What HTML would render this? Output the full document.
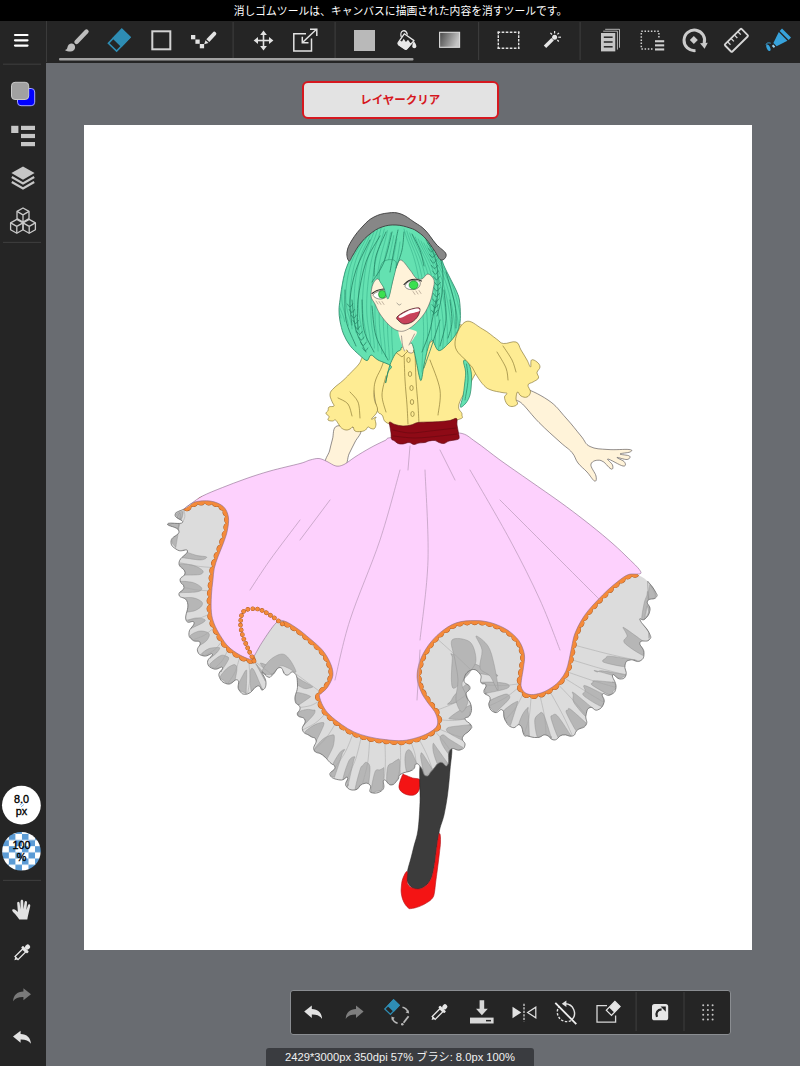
<!DOCTYPE html>
<html lang="ja">
<head>
<meta charset="utf-8">
<title>MediBang Paint</title>
<style>
html,body{margin:0;padding:0;}
body{width:800px;height:1066px;overflow:hidden;background:#696c71;position:relative;font-family:"Liberation Sans","Noto Sans CJK JP",sans-serif;}
#hint{position:absolute;left:0;top:0;width:800px;height:21px;background:#000;color:#fff;font-size:10.8px;line-height:21px;text-align:center;white-space:nowrap;letter-spacing:0;}
#hint span{position:relative;top:0.5px;left:0.5px}
#toolbar{position:absolute;left:0;top:21px;width:800px;height:42px;background:#252525;}
#toolbar svg{position:absolute;left:0;top:-21px;}
#sidebar{position:absolute;left:0;top:63px;width:46px;height:1003px;background:#252525;}
#sidebar svg{position:absolute;left:0;top:-63px;}
.sz{position:absolute;left:2px;width:39px;text-align:center;color:#000;font-weight:400;-webkit-text-stroke:0.35px #000;font-size:10.8px;line-height:11.5px;}
#clear{position:absolute;left:302px;top:81px;width:192.5px;height:34px;border:2px solid #d6181f;border-radius:6px;background:#e3e3e3;color:#d6181f;font-weight:700;font-size:11.5px;line-height:34px;text-align:center;}
#canvas{position:absolute;left:84px;top:125px;width:668px;height:824.5px;background:#fff;overflow:hidden;}
#canvas svg{position:absolute;left:-84px;top:-125px;}
#bottombar{position:absolute;left:290px;top:989.5px;width:439px;height:43.5px;background:#252525;border:1px solid #8a8d91;border-radius:3px;box-sizing:content-box;}
#bottombar svg{position:absolute;left:-291px;top:-990.5px;}
#status{position:absolute;left:266px;top:1047.5px;width:268px;height:19px;background:#3a3c40;border-radius:3px 3px 0 0;color:#f0f0f0;font-size:11.2px;line-height:19px;text-align:center;white-space:nowrap;}
</style>
</head>
<body>
<div id="hint"><span>消しゴムツールは、キャンバスに描画された内容を消すツールです。</span></div>

<div id="toolbar">
<svg width="800" height="70" viewBox="0 0 800 70">
<!--TOOLBAR-->
<g fill="none" stroke="none">
<!-- separators -->
<rect x="46" y="21" width="1" height="41" fill="#3b3b3b"/>
<rect x="232.5" y="22" width="1.2" height="38" fill="#3b3b3b"/>
<rect x="334.5" y="22" width="1.2" height="38" fill="#3b3b3b"/>
<rect x="478" y="22" width="1.2" height="38" fill="#3b3b3b"/>
<rect x="579.5" y="22" width="1.2" height="38" fill="#3b3b3b"/>
<!-- underline -->
<rect x="59" y="58" width="354.5" height="2.6" rx="1" fill="#a2a2a2"/>
<!-- hamburger -->
<g stroke="#fff" stroke-width="2.2" stroke-linecap="round">
<line x1="15" y1="35" x2="27.5" y2="35"/><line x1="15" y1="40.3" x2="27.5" y2="40.3"/><line x1="15" y1="45.6" x2="27.5" y2="45.6"/>
</g>
<!-- brush -->
<line x1="86.5" y1="31.5" x2="76.5" y2="42" stroke="#bdbdbd" stroke-width="4.4" stroke-linecap="round"/>
<path d="M71 43.600c2.300-.3 4.100 1.400 4.100 3.600c0 2.400-2 4.300-4.600 4.300c-2.100 0-4.200-.5-5.700-1.500c1.600-.4 2.300-1.300 2.600-2.600c.4-2 1.700-3.500 3.600-3.800z" fill="#bdbdbd"/>
<!-- eraser -->
<g transform="translate(119.2 40.3) rotate(-46)">
<rect x="-9.600" y="-5.700" width="19.200" height="11.400" fill="none" stroke="#2e8db4" stroke-width="1.600"/>
<rect x="-3.400" y="-6.400" width="13.800" height="12.800" fill="#2e8db4"/>
</g>
<!-- square -->
<rect x="152.3" y="31.3" width="18" height="18" stroke="#d2d2d2" stroke-width="2"/>
<!-- dot pen -->
<g fill="#e2e2e2">
<rect x="191" y="35" width="4.300" height="4.300"/><rect x="195.400" y="39.500" width="4.300" height="4.300"/><rect x="199.800" y="44" width="4.300" height="4.300"/>
<path d="M204.200 44.300l1.300-4l3 2.700z"/>
<path d="M206.300 39.300l6.500-6.900a2 2 0 0 1 3 2.700l-6.500 6.900z"/>
</g>
<!-- move -->
<g stroke="#e2e2e2" stroke-width="1.600">
<line x1="263.500" y1="33" x2="263.500" y2="48"/><line x1="256" y1="40.500" x2="271" y2="40.500"/>
</g>
<g fill="#e2e2e2">
<path d="M263.500 30.600l3.400 4.400h-6.800z"/><path d="M263.500 50.400l3.400-4.400h-6.800z"/>
<path d="M253.600 40.500l4.400-3.400v6.800z"/><path d="M273.400 40.500l-4.400-3.400v6.800z"/>
</g>
<!-- transform -->
<g stroke="#e2e2e2" stroke-width="1.500" fill="none">
<path d="M306 33.800h-12.200v17.200h17.700v-12.500"/>
<path d="M302.500 42.500l14-13.300"/>
<path d="M310 29.200h6.800v6.800"/>
<path d="M302.300 36.800v6h6.200"/>
</g>
<!-- fill square -->
<rect x="354" y="30" width="21" height="21" fill="#b9b9b9"/>
<!-- bucket -->
<path d="M404.300 33.800l9.700 6.800l-7.200 8.200c-.5.500-1.300.6-1.900.2l-6.300-4.400c-.7-.5-.8-1.300-.4-2z" fill="#252525" stroke="#e8e8e8" stroke-width="1.300" stroke-linejoin="round"/>
<path d="M399.400 40.600l2.600 1l1.700-2.900l2.200 3.400l2.100-2.300l2.300 3.200l2.400-.3l-5.900 6.700c-.5.500-1.300.6-1.900.2l-6.300-4.400c-.7-.5-.8-1.300-.4-2z" fill="#e8e8e8"/>
<path d="M401.300 37c-.9-2.600-.3-5.400 1.700-6.100c2-.6 3.700 1.200 4.500 3.700" fill="none" stroke="#e8e8e8" stroke-width="1.300"/>
<path d="M413.800 41.200c1.400 1.600 2.500 3.500 2.500 5a2 2 0 0 1-4 0c0-1.700.7-3.400 1.500-5z" fill="#e8e8e8"/>
<!-- gradient -->
<defs><linearGradient id="gr" x1="0" y1="0" x2="1" y2="0.300"><stop offset="0" stop-color="#474747"/><stop offset="1" stop-color="#c4c4c4"/></linearGradient></defs>
<rect x="439.600" y="32.300" width="20" height="15" fill="url(#gr)" stroke="#dcdcdc" stroke-width="1.100"/>
<!-- select rect -->
<g stroke="#e2e2e2" stroke-width="1.400" stroke-dasharray="2.600 1.460"><path d="M497.600 32.300h21.800"/><path d="M497.600 48.300h21.800"/><path d="M498.300 31.600v17.400" stroke-dasharray="2.600 1.100"/><path d="M518.700 31.600v17.400" stroke-dasharray="2.600 1.100"/></g>
<!-- wand -->
<line x1="545" y1="46.700" x2="552.600" y2="39.200" stroke="#e6e6e6" stroke-width="3.400"/>
<circle cx="554.600" cy="37.200" r="2.500" fill="#e6e6e6"/>
<g stroke="#e6e6e6" stroke-width="1.200">
<line x1="554.600" y1="31" x2="554.600" y2="33.400"/><line x1="559" y1="32.800" x2="557.400" y2="34.400"/><line x1="558.300" y1="37.200" x2="561" y2="37.200"/>
<line x1="557.300" y1="40" x2="558.800" y2="41.500"/><line x1="550.400" y1="32.900" x2="552" y2="34.500"/>
</g>
<!-- docs -->
<g>
<path d="M605.200 29.300h14.300v18.400" stroke="#c6c6c6" stroke-width="0.900"/>
<path d="M603.200 31.200h14.200v18.400" stroke="#c6c6c6" stroke-width="0.900"/>
<rect x="601" y="33" width="14.300" height="18.400" fill="#c6c6c6"/>
<g stroke="#252525" stroke-width="1.500"><line x1="603.800" y1="37.200" x2="612.600" y2="37.200"/><line x1="603.800" y1="42" x2="612.600" y2="42"/><line x1="603.800" y1="46.800" x2="612.600" y2="46.800"/></g>
</g>
<!-- select lines -->
<rect x="641.300" y="31.300" width="17.600" height="17.600" stroke="#cfcfcf" stroke-width="1.500" stroke-dasharray="1.500 1.700"/>
<rect x="653" y="38" width="12" height="14" fill="#252525"/>
<g fill="#cfcfcf"><rect x="655" y="40.200" width="9.200" height="2.100"/><rect x="655" y="44.300" width="9.200" height="2.100"/><rect x="655" y="48.400" width="9.200" height="2.100"/></g>
<!-- rotate -->
<path d="M695.500 50.600a10.300 10.300 0 1 1 8.600-7" stroke="#cbcbcb" stroke-width="3"/>
<path d="M700 43.200l7.800-.4l-3.200 6z" fill="#cbcbcb"/>
<path d="M693.800 36l4 4l-4 4l-4-4z" fill="#cbcbcb"/>
<!-- ruler -->
<g transform="translate(736.400 40.300) rotate(-44.500)" stroke="#d6d6d6" stroke-width="1.800">
<rect x="-11.700" y="-5.200" width="23.400" height="10.400" rx="1"/>
<g stroke-width="1.300"><line x1="-7.300" y1="-5" x2="-7.300" y2="-1"/><line x1="-2.500" y1="-5" x2="-2.500" y2="-1"/><line x1="2.300" y1="-5" x2="2.300" y2="-1"/><line x1="7.100" y1="-5" x2="7.100" y2="-1"/></g>
</g>
<!-- blue pen -->
<g fill="#37a3dc">
<path d="M782 28.600l9 9l-2.300 2.300l-9-9z"/>
<path d="M778.800 32.100l8.600 8.600l-10.800 5.600l-3.200-3.200z"/>
<path d="M773.200 44.600l2 2l-1.300 1.300l-2-2z" fill="#9fd4f0"/>
<ellipse cx="768.400" cy="47.800" rx="1.700" ry="3.500" transform="rotate(-24 768.400 47.800)"/>
<path d="M766.300 45c-.6-1.600 1.500-2.700 4.400-1.800" fill="none" stroke="#37a3dc" stroke-width="1"/>
</g>
</g>
</svg>
</div>

<div id="sidebar">
<svg width="46" height="1066" viewBox="0 0 46 1066">
<!--SIDEBAR-->
<defs>
<pattern id="chk" x="2.300" y="833.900" width="13.100" height="12.300" patternUnits="userSpaceOnUse">
<rect width="13.100" height="12.300" fill="#fff"/>
<rect x="6.550" y="0" width="6.550" height="6.150" fill="#5b9bd5"/>
<rect x="0" y="6.150" width="6.550" height="6.150" fill="#5b9bd5"/>
</pattern>
</defs>
<g fill="none">
<rect x="3" y="63.600" width="38" height="1.200" fill="#3b3b3b"/>
<rect x="3" y="241.800" width="38" height="1.200" fill="#3b3b3b"/>
<rect x="3" y="879.800" width="38" height="1.200" fill="#3b3b3b"/>
<!-- swatches -->
<rect x="17.500" y="88.500" width="17.200" height="17.200" rx="3.500" fill="#0000ff" stroke="#a4a4ff" stroke-width="1"/>
<rect x="11.500" y="82.300" width="17.200" height="17.200" rx="3.500" fill="#a1a1a1" stroke="#c9c9c9" stroke-width="1"/>
<!-- list -->
<g fill="#c6c6c6"><rect x="11.200" y="125.800" width="7.200" height="7.200"/><rect x="21" y="125.800" width="14" height="4.200"/><rect x="21" y="133.900" width="14" height="4.200"/><rect x="21" y="142" width="14" height="4.200"/></g>
<!-- layers -->
<path d="M23 166.400l11.600 6.700l-11.600 6.700l-11.600-6.700z" fill="#c6c6c6"/>
<path d="M11.800 177l11.200 6.500l11.200-6.500M11.800 182l11.200 6.500l11.200-6.500" stroke="#c6c6c6" stroke-width="2.200"/>
<!-- cubes -->
<g stroke="#c9c9c9" stroke-width="1.300" stroke-linejoin="round">
<path d="M23 208l6 3.400v7.200l-6 3.400l-6-3.400v-7.200z"/><path d="M17 211.400l6 3.500l6-3.500M23 214.900v7.100"/>
<path d="M16.800 219.400l6.200 3.500v6.800l-6.200 3.500l-6.200-3.500v-6.800z"/><path d="M10.600 222.900l6.200 3.500l6.200-3.500M16.800 226.400v6.800"/>
<path d="M29.200 219.400l6.200 3.500v6.800l-6.200 3.500l-6.200-3.500v-6.800z"/><path d="M23 222.900l6.200 3.500l6.200-3.500M29.200 226.400v6.800"/>
</g>
<!-- size circles -->
<circle cx="21.400" cy="805.200" r="19.400" fill="#fff"/>
<path d="M19.800 805.200l3.200-2.600M21 806.800l3-2.400" stroke="#7db4e6" stroke-width="1"/>
<circle cx="21.400" cy="851.300" r="19.300" fill="url(#chk)"/>
<!-- hand -->
<path d="M19.300 919.600c-1.200-2.300-3.300-4.800-5.800-7.200c-1.300-1.200-1.600-2.200-1-2.800c.8-.8 2.200-.4 3.400.6l2 1.700l-.7-8.300c-.1-1.200.4-1.900 1.100-1.900c.8 0 1.300.7 1.400 1.800l.7 5.700l.2-7.600c0-1.200.5-1.800 1.300-1.800s1.300.6 1.300 1.800l.3 7.600l1-6.500c.2-1.100.7-1.700 1.500-1.600c.8.100 1.100.9 1 2l-.6 7l1.500-4.600c.3-1 .9-1.500 1.600-1.300c.7.200.9 1 .7 2l-1.900 8.300c-.4 1.800-.8 3.300-1 5.100z" fill="#e2e2e2"/>
<!-- eyedropper -->
<g transform="translate(14.400 960.200) rotate(-45)" fill="#e6e6e6"><path d="M0 0l3-1.700v3.400z"/><rect x="3" y="-2.100" width="10.800" height="4.200" fill="none" stroke="#e6e6e6" stroke-width="1.300"/><rect x="13.600" y="-4.200" width="2.700" height="8.400" rx="0.800"/><rect x="16" y="-2.300" width="5.200" height="4.600" rx="2"/></g>
<!-- redo -->
<path d="M31 994.200l-7.600-5.900v3.300c-6.300.2-10 3.700-10.300 9.700c2.200-3.200 5.400-4.400 10.300-4.300v3.300z" fill="#7a7a7a"/>
<!-- undo -->
<path d="M13 1036.600l7.600-5.900v3.300c6.300.2 10 3.700 10.300 9.700c-2.200-3.200-5.400-4.400-10.300-4.300v3.300z" fill="#e2e2e2"/>
</g>
</svg>
<div class="sz" style="top:731px">8.0<br>px</div>
<div class="sz" style="top:777px">100<br>%</div>
</div>

<div id="clear">レイヤークリア</div>

<div id="canvas">
<svg width="800" height="1066" viewBox="0 0 800 1066">
<!--ART-->
<path d="M402.5 775C401.5 777.1 398.6 784.3 399 787.5C399.4 790.7 402.5 792.8 405 794C407.5 795.2 411.7 795.7 414 795C416.3 794.3 418 792.5 419 790C420 787.5 421.1 782 420 780C418.9 778 415 778.8 412.5 778C410 777.2 406.7 775.5 405 775C403.3 774.5 403.5 772.9 402.5 775Z" fill="#f41414" stroke="#b01018" stroke-width="0.6" stroke-linejoin="round"/>
<path d="M421 760C418.3 768.8 420.5 790.8 420 802.5C419.5 814.2 419 822.8 418 830C417 837.2 415.2 841.3 414 846C412.8 850.7 412.1 853.8 411 858C409.9 862.2 408.2 867.2 407.5 871C406.8 874.8 406.2 878.2 407 881C407.8 883.8 410.5 886.7 412.5 888C414.5 889.3 417 889.2 419 889C421 888.8 422.8 887.9 424.5 886.7C426.2 885.5 428 884 429.3 882C430.6 880 431.6 878 432.5 874.7C433.4 871.4 434.3 866.1 435 862C435.7 857.9 435.9 854.3 436.5 850C437.1 845.7 437.9 840.1 438.5 836.4C439.1 832.7 439.1 831.6 440 828C440.9 824.4 442.8 820.5 444 815C445.2 809.5 446.5 802.5 447.5 795C448.5 787.5 449.4 778.3 450 770C450.6 761.7 453.3 748.3 451 745C448.7 741.7 441 747.5 436 750C431 752.5 423.7 751.2 421 760Z" fill="#3c3c3c" stroke="#222" stroke-width="0.5" stroke-linejoin="round"/>
<path d="M407 871.5C406.2 870.9 404.1 875.1 403 878C401.9 880.9 401.7 882.8 401.4 886C401.1 889.2 400.9 890.8 401.4 894C401.9 897.2 402.5 899.3 403.8 902C405.1 904.7 406.4 906.1 407.8 907.4C409.2 908.7 408.8 908.8 411 908.6C413.2 908.4 415.8 907.8 419 906.6C422.2 905.4 424.3 904.3 427 902.6C429.7 900.9 431 900.1 432.5 898C434 895.9 433.9 895.2 434.5 892C435.1 888.8 435.1 886.4 435.7 882C436.3 877.6 436.6 875.6 437.3 870C438 864.4 438.7 859.6 439.3 854C439.9 848.4 440.4 846 440.5 842C440.6 838 440.4 835.1 440 834C439.6 832.9 439.2 833.2 438.5 836.4C437.8 839.6 437.2 844.9 436.5 850C435.8 855.1 435.8 857.1 435 862C434.2 866.9 433.6 870.7 432.5 874.7C431.4 878.7 430.9 879.6 429.3 882C427.7 884.4 426.6 885.3 424.5 886.7C422.4 888.1 421.4 888.7 419 889C416.6 889.3 414.6 888.8 412.5 888C410.4 887.2 409.6 886.4 408.5 885C407.4 883.6 407.3 883.7 407 881C406.7 878.3 407.8 872.1 407 871.5Z" fill="#f41414" stroke="#b01018" stroke-width="0.6" stroke-linejoin="round"/>
<defs><clipPath id="pc"><path d="M184 509C171.5 513.3 175.4 511.4 175 515C174.6 518.6 184.5 520.1 182.5 522.5C180.5 524.9 168.4 521.7 167.5 524C166.6 526.3 178.1 526.5 179 531C179.9 535.5 171.4 535.9 171 541C170.6 546.1 173.1 547.3 177.5 550C181.9 552.7 187.1 547.7 187.5 551C187.9 554.3 179.7 556.8 179 562.5C178.3 568.2 184.7 567.8 185 572.5C185.3 577.2 180.3 576 180 580C179.7 584 184.3 583.5 184 587.5C183.7 591.5 178.1 591 179 595C179.9 599 185.6 595.8 187.5 602.5C189.4 609.2 184.3 614.7 186 620C187.7 625.3 193.2 619.2 194 622.5C194.8 625.8 189.4 627.8 189 632.5C188.6 637.2 189.6 637.3 192.5 640C195.4 642.7 198.7 639.6 200 642.5C201.3 645.4 196.4 647.4 197.5 651C198.6 654.6 200 655.2 204 656C208 656.8 211.6 652.3 212.5 654C213.4 655.7 207.1 658.5 207.5 662.5C207.9 666.5 210 667.7 214 669C218 670.3 221.2 665.6 222.5 667.5C223.8 669.4 217.7 671.6 219 676C220.3 680.4 222.6 682.9 227.5 684C232.4 685.1 234.4 678.4 237.5 680C240.6 681.6 236.3 686.3 239 690C241.7 693.7 242.6 695.1 247.5 694C252.4 692.9 253.5 687.1 257.5 686C261.5 684.9 260.2 690.9 262.5 690C264.8 689.1 266.1 687.3 266 682.5C265.9 677.7 261.5 673.5 262 672C262.5 670.5 265.2 676.2 268 677C270.8 677.8 269.3 677.5 272.5 675C275.7 672.5 276.4 667.5 280 667.5C283.6 667.5 282.3 673.7 286 675C289.7 676.3 290.9 669.8 294 672.5C297.1 675.2 297.2 677.7 297.5 685C297.8 692.3 294.3 694 295 700C295.7 706 299.3 703.5 300 707.5C300.7 711.5 296.2 711.7 297.5 715C298.8 718.3 303.7 716 305 720C306.3 724 301.2 725.7 302.5 730C303.8 734.3 306.4 733.3 310 736C313.6 738.7 314.9 736.3 316 740C317.1 743.7 312.3 746 314 750C315.7 754 318.2 751.7 322.5 755C326.8 758.3 326.7 759.2 330 762.5C333.3 765.8 335 764.2 335 767.5C335 770.8 328.7 771.7 330 775C331.3 778.3 335.3 779.3 340 780C344.7 780.7 345.9 775.9 347.5 777.5C349.1 779.1 344 782.7 346 786C348 789.3 350.6 790.5 355 790C359.4 789.5 358.5 785.3 362.5 784C366.5 782.7 367.7 782.7 370 785C372.3 787.3 367.7 791.2 371 792.5C374.3 793.8 379 793.3 382.5 790C386 786.7 381.7 781.3 384 780C386.3 778.7 387.4 785 391 785C394.6 785 394.8 782.9 397.5 780C400.2 777.1 397 776.7 401 774C405 771.3 408.5 772.7 412.5 770C416.5 767.3 413.7 764.7 416 764C418.3 763.3 418.3 764.3 421 767.5C423.7 770.7 422.9 775.3 426 776C429.1 776.7 428.8 773.6 432.5 770C436.2 766.4 436 763.8 440 762.5C444 761.2 444.8 768.3 447.5 765C450.2 761.7 446.7 754 450 750C453.3 746 456 751.3 460 750C464 748.7 464.3 748.3 465 745C465.7 741.7 461.2 741.5 462.5 737.5C463.8 733.5 467.7 733.3 470 730C472.3 726.7 472.3 727.9 471 725C469.7 722.1 465.3 721.7 465 719C464.7 716.3 468.4 718.7 470 715C471.6 711.3 472.1 710.3 471 705C469.9 699.7 466.3 699.7 466 695C465.7 690.3 470.5 691.5 470 687.5C469.5 683.5 463.7 684.7 464 680C464.3 675.3 466.7 671.6 471 670C475.3 668.4 477.3 670.7 480 674C482.7 677.3 479.4 679.6 481 682.5C482.6 685.4 485.2 682.3 486 685C486.8 687.7 482.9 689.2 484 692.5C485.1 695.8 488.7 693.9 490 697.5C491.3 701.1 487.7 702 489 706C490.3 710 491.4 711.4 495 712.5C498.6 713.6 499.8 708 502.5 710C505.2 712 502.3 715.3 505 720C507.7 724.7 508.5 726.2 512.5 727.5C516.5 728.8 516.9 723 520 725C523.1 727 522 732.1 524 735C526 737.9 523.9 735.3 527.5 736C531.1 736.7 532.6 737.8 537.5 737.5C542.4 737.2 541.6 734.3 546 735C550.4 735.7 549.6 740 554 740C558.4 740 557.6 736.1 562.5 735C567.4 733.9 568.5 737.3 572.5 736C576.5 734.7 573.9 732.9 577.5 730C581.1 727.1 583.7 729 586 725C588.3 721 584.9 719.7 586 715C587.1 710.3 586.9 708.8 590 707.5C593.1 706.2 593.8 711.3 597.5 710C601.2 708.7 602.7 706.8 604 702.5C605.3 698.2 600.9 696 602.5 694C604.1 692 606.4 696.7 610 695C613.6 693.3 615.3 692.8 616 687.5C616.7 682.2 611.4 677.3 612.5 675C613.6 672.7 616.4 679 620 679C623.6 679 624.7 678.7 626 675C627.3 671.3 623.9 669 625 665C626.1 661 626 661.1 630 660C634 658.9 636.3 663 640 661C643.7 659 644 657.4 644 652.5C644 647.6 638.7 645.8 640 642.5C641.3 639.2 646.6 642.7 649 640C651.4 637.3 651.4 637.8 649 632.5C646.6 627.2 641.1 623.6 640 620C638.9 616.4 642.3 621.7 645 619C647.7 616.3 649.3 614.8 650 610C650.7 605.2 645.9 604.3 647.5 601C649.1 597.7 654 600.2 656 597.5C658 594.8 657.3 595.4 655 591C652.7 586.6 653.1 586.1 647.5 581C641.9 575.9 643.5 578.7 634 572C624.5 565.3 629.1 560.3 612 556C594.9 551.7 605.2 544.3 570 556C534.8 567.7 525.3 577.6 480 600C434.7 622.4 440 640 400 640C360 640 367.3 621.3 330 600C292.7 578.7 288.8 586.9 260 560C231.2 533.1 242.3 512.6 222 499C201.7 485.4 196.5 504.7 184 509Z"/></clipPath></defs>
<path d="M184 509C171.5 513.3 175.4 511.4 175 515C174.6 518.6 184.5 520.1 182.5 522.5C180.5 524.9 168.4 521.7 167.5 524C166.6 526.3 178.1 526.5 179 531C179.9 535.5 171.4 535.9 171 541C170.6 546.1 173.1 547.3 177.5 550C181.9 552.7 187.1 547.7 187.5 551C187.9 554.3 179.7 556.8 179 562.5C178.3 568.2 184.7 567.8 185 572.5C185.3 577.2 180.3 576 180 580C179.7 584 184.3 583.5 184 587.5C183.7 591.5 178.1 591 179 595C179.9 599 185.6 595.8 187.5 602.5C189.4 609.2 184.3 614.7 186 620C187.7 625.3 193.2 619.2 194 622.5C194.8 625.8 189.4 627.8 189 632.5C188.6 637.2 189.6 637.3 192.5 640C195.4 642.7 198.7 639.6 200 642.5C201.3 645.4 196.4 647.4 197.5 651C198.6 654.6 200 655.2 204 656C208 656.8 211.6 652.3 212.5 654C213.4 655.7 207.1 658.5 207.5 662.5C207.9 666.5 210 667.7 214 669C218 670.3 221.2 665.6 222.5 667.5C223.8 669.4 217.7 671.6 219 676C220.3 680.4 222.6 682.9 227.5 684C232.4 685.1 234.4 678.4 237.5 680C240.6 681.6 236.3 686.3 239 690C241.7 693.7 242.6 695.1 247.5 694C252.4 692.9 253.5 687.1 257.5 686C261.5 684.9 260.2 690.9 262.5 690C264.8 689.1 266.1 687.3 266 682.5C265.9 677.7 261.5 673.5 262 672C262.5 670.5 265.2 676.2 268 677C270.8 677.8 269.3 677.5 272.5 675C275.7 672.5 276.4 667.5 280 667.5C283.6 667.5 282.3 673.7 286 675C289.7 676.3 290.9 669.8 294 672.5C297.1 675.2 297.2 677.7 297.5 685C297.8 692.3 294.3 694 295 700C295.7 706 299.3 703.5 300 707.5C300.7 711.5 296.2 711.7 297.5 715C298.8 718.3 303.7 716 305 720C306.3 724 301.2 725.7 302.5 730C303.8 734.3 306.4 733.3 310 736C313.6 738.7 314.9 736.3 316 740C317.1 743.7 312.3 746 314 750C315.7 754 318.2 751.7 322.5 755C326.8 758.3 326.7 759.2 330 762.5C333.3 765.8 335 764.2 335 767.5C335 770.8 328.7 771.7 330 775C331.3 778.3 335.3 779.3 340 780C344.7 780.7 345.9 775.9 347.5 777.5C349.1 779.1 344 782.7 346 786C348 789.3 350.6 790.5 355 790C359.4 789.5 358.5 785.3 362.5 784C366.5 782.7 367.7 782.7 370 785C372.3 787.3 367.7 791.2 371 792.5C374.3 793.8 379 793.3 382.5 790C386 786.7 381.7 781.3 384 780C386.3 778.7 387.4 785 391 785C394.6 785 394.8 782.9 397.5 780C400.2 777.1 397 776.7 401 774C405 771.3 408.5 772.7 412.5 770C416.5 767.3 413.7 764.7 416 764C418.3 763.3 418.3 764.3 421 767.5C423.7 770.7 422.9 775.3 426 776C429.1 776.7 428.8 773.6 432.5 770C436.2 766.4 436 763.8 440 762.5C444 761.2 444.8 768.3 447.5 765C450.2 761.7 446.7 754 450 750C453.3 746 456 751.3 460 750C464 748.7 464.3 748.3 465 745C465.7 741.7 461.2 741.5 462.5 737.5C463.8 733.5 467.7 733.3 470 730C472.3 726.7 472.3 727.9 471 725C469.7 722.1 465.3 721.7 465 719C464.7 716.3 468.4 718.7 470 715C471.6 711.3 472.1 710.3 471 705C469.9 699.7 466.3 699.7 466 695C465.7 690.3 470.5 691.5 470 687.5C469.5 683.5 463.7 684.7 464 680C464.3 675.3 466.7 671.6 471 670C475.3 668.4 477.3 670.7 480 674C482.7 677.3 479.4 679.6 481 682.5C482.6 685.4 485.2 682.3 486 685C486.8 687.7 482.9 689.2 484 692.5C485.1 695.8 488.7 693.9 490 697.5C491.3 701.1 487.7 702 489 706C490.3 710 491.4 711.4 495 712.5C498.6 713.6 499.8 708 502.5 710C505.2 712 502.3 715.3 505 720C507.7 724.7 508.5 726.2 512.5 727.5C516.5 728.8 516.9 723 520 725C523.1 727 522 732.1 524 735C526 737.9 523.9 735.3 527.5 736C531.1 736.7 532.6 737.8 537.5 737.5C542.4 737.2 541.6 734.3 546 735C550.4 735.7 549.6 740 554 740C558.4 740 557.6 736.1 562.5 735C567.4 733.9 568.5 737.3 572.5 736C576.5 734.7 573.9 732.9 577.5 730C581.1 727.1 583.7 729 586 725C588.3 721 584.9 719.7 586 715C587.1 710.3 586.9 708.8 590 707.5C593.1 706.2 593.8 711.3 597.5 710C601.2 708.7 602.7 706.8 604 702.5C605.3 698.2 600.9 696 602.5 694C604.1 692 606.4 696.7 610 695C613.6 693.3 615.3 692.8 616 687.5C616.7 682.2 611.4 677.3 612.5 675C613.6 672.7 616.4 679 620 679C623.6 679 624.7 678.7 626 675C627.3 671.3 623.9 669 625 665C626.1 661 626 661.1 630 660C634 658.9 636.3 663 640 661C643.7 659 644 657.4 644 652.5C644 647.6 638.7 645.8 640 642.5C641.3 639.2 646.6 642.7 649 640C651.4 637.3 651.4 637.8 649 632.5C646.6 627.2 641.1 623.6 640 620C638.9 616.4 642.3 621.7 645 619C647.7 616.3 649.3 614.8 650 610C650.7 605.2 645.9 604.3 647.5 601C649.1 597.7 654 600.2 656 597.5C658 594.8 657.3 595.4 655 591C652.7 586.6 653.1 586.1 647.5 581C641.9 575.9 643.5 578.7 634 572C624.5 565.3 629.1 560.3 612 556C594.9 551.7 605.2 544.3 570 556C534.8 567.7 525.3 577.6 480 600C434.7 622.4 440 640 400 640C360 640 367.3 621.3 330 600C292.7 578.7 288.8 586.9 260 560C231.2 533.1 242.3 512.6 222 499C201.7 485.4 196.5 504.7 184 509Z" fill="#dcdcdc"/>
<path clip-path="url(#pc)" d="M176.3 514.1C175.9 515 176.5 516.1 177.1 517.1C177.8 518.2 179.7 519.4 180.4 520.4C181 521.3 181.1 522.2 181 522.6C180.9 523.1 179.7 522.9 179.5 522.8C179.3 522.7 179.3 523.1 179.7 522.1C180.2 521.2 181.7 518.7 182.2 517C182.8 515.4 183 513.4 182.9 512.4C182.9 511.5 182.5 511.5 181.9 511.5C181.4 511.4 180.4 511.6 179.5 512C178.5 512.5 176.7 513.3 176.3 514.1ZM172 523.5C170.4 524.6 167.5 523.5 167.5 524C167.5 524.5 170.4 525.8 171.8 526.6C173.2 527.5 175.2 528.7 176.1 529.2C177.1 529.8 177.3 530.2 177.6 530.1C177.9 530.1 177.6 530.6 177.9 529.1C178.2 527.5 179 523.4 179.4 520.9C179.8 518.5 180.4 515.5 180.3 514.3C180.3 513.1 179.6 513 179 513.5C178.5 514.1 178.1 515.9 176.9 517.6C175.8 519.2 173.6 522.5 172 523.5ZM176 534.8C175 537.1 173.7 537.2 173 538.5C172.3 539.8 171.6 541 171.9 542.3C172.2 543.6 174.1 545.3 174.7 546.1C175.3 547 175.4 547.5 175.6 547.4C175.9 547.3 175.6 548.3 176.1 545.5C176.5 542.7 178 534.9 178.5 530.9C179.1 526.9 179.1 523.8 179.4 521.6C179.8 519.4 180.7 517.5 180.7 517.9C180.7 518.3 180.1 521.4 179.3 524.2C178.5 527 177 532.4 176 534.8ZM182.5 550.5C181.1 549.8 187.1 550.3 187.5 551C187.9 551.7 185.5 553.8 184.7 554.8C183.9 555.9 182.9 556.9 182.8 557.4C182.7 557.9 181.1 557.5 184.2 557.9C187.2 558.3 197.4 560.1 201.1 559.9C204.8 559.7 207.3 557.7 206.5 556.9C205.6 556.2 200.1 556.4 196.2 555.3C192.2 554.2 183.9 551.2 182.5 550.5ZM179.9 563.9C178 564.4 181.6 566.8 182.4 568.2C183.3 569.6 184.8 571.4 185 572.5C185.2 573.6 183.4 574.6 183.3 575C183.3 575.4 181.9 575.2 184.7 575.1C187.4 575.1 196.9 575.2 199.9 574.5C202.9 573.7 203.8 572.2 202.8 570.7C201.8 569.2 197.6 566.7 193.8 565.5C190 564.4 181.8 563.5 179.9 563.9ZM180.8 581.5C179.1 582 182.9 584.6 183.2 586C183.5 587.4 182.8 588.9 182.3 590C181.9 591.1 180.7 592.1 180.7 592.5C180.6 592.9 179.2 592.8 182 592.6C184.9 592.5 194.5 592.5 197.7 591.7C201 590.9 202.4 589.4 201.6 587.9C200.9 586.4 196.9 583.8 193.5 582.7C190 581.7 182.5 581 180.8 581.5ZM182.6 598.2C181.5 598.8 185.5 600.2 186.3 601.4C187 602.7 187.1 604.2 187.2 605.7C187.3 607.2 186.9 609.4 186.8 610.5C186.7 611.5 186.5 611.8 186.7 612C186.8 612.3 186.3 612.3 187.7 612.1C189.2 611.8 193.2 611.4 195.5 610.4C197.9 609.4 200.7 607.3 201.7 605.9C202.7 604.4 202.9 602.9 201.5 601.5C200 600.2 196.2 598.3 193.1 597.8C189.9 597.2 183.8 597.6 182.6 598.2ZM187.6 620.5C186.8 621.2 191.6 621.2 192.4 622C193.2 622.8 192.8 624.3 192.6 625.4C192.4 626.4 191.2 627.8 191.1 628.2C191.1 628.6 190.1 628.9 192.1 627.9C194.1 627 200.8 624 202.9 622.7C205.1 621.3 205.8 620.4 204.8 619.6C203.8 618.8 199.8 617.7 197 617.9C194.1 618 188.4 619.8 187.6 620.5ZM190.4 635.5C189.3 637 191.4 639 192.5 640C193.6 641 195.8 640.8 197 641.5C198.2 642.2 199.2 643.5 199.5 644.2C199.8 644.9 198.9 645.7 199 645.9C199.1 646.1 198.6 646.3 199.9 645.4C201.1 644.5 204.9 642.5 206.5 640.7C208.1 639 209.3 636.4 209.4 635C209.4 633.5 208.5 632.6 206.7 632C205 631.4 201.6 630.6 198.9 631.2C196.1 631.8 191.5 634 190.4 635.5ZM201.4 654C200.8 655.2 204.1 655.5 205.7 655.6C207.3 655.7 209.9 654.2 210.8 654.4C211.7 654.6 211 656.2 210.8 656.8C210.7 657.5 210 658.1 210 658.2C210 658.4 209.6 658.6 210.7 657.7C211.8 656.8 215.1 654.5 216.6 652.9C218.1 651.4 219.6 649.2 219.7 648.3C219.8 647.4 219.1 647.5 217.3 647.5C215.6 647.6 211.7 647.5 209 648.6C206.4 649.6 202 652.8 201.4 654ZM209.7 664.7C209.2 666.2 211.6 667.3 212.9 667.9C214.2 668.5 215.8 668.5 217.4 668.4C219 668.3 221.9 666.9 222.5 667.5C223.1 668.1 221 671 220.8 671.8C220.5 672.5 220.6 671.9 220.8 671.8C220.9 671.6 221.3 671.1 221.4 670.9C221.5 670.8 220.2 672.9 221.4 670.9C222.6 669 227.8 661.7 228.6 659.3C229.4 656.8 227.2 656.7 226 656.1C224.9 655.4 223.3 654.9 221.6 655.3C220 655.7 217.9 657.1 215.9 658.7C213.9 660.2 210.2 663.1 209.7 664.7ZM220.2 677.1C219.8 679.1 222.6 679.4 223.9 680.6C225.1 681.7 226.2 683.7 227.5 684C228.8 684.3 230.6 682.8 231.8 682.3C233 681.8 234.1 681.5 234.6 681.1C235.2 680.8 234.7 681.9 235.1 680.1C235.4 678.2 236.7 672.4 236.9 670C237 667.6 236.7 666.4 236.1 665.6C235.4 664.7 234.8 664.3 233.2 664.8C231.6 665.4 228.6 666.8 226.4 668.9C224.2 670.9 220.6 675.2 220.2 677.1ZM238.2 685C237.6 687.5 238.2 688.8 239 690C239.8 691.2 242.1 691.4 243.2 692C244.4 692.6 245.6 693.4 246.1 693.3C246.6 693.3 246.1 694.9 246.2 691.8C246.3 688.6 246.7 678.1 246.7 674.4C246.7 670.8 246.8 670 246.2 670.1C245.6 670.1 244.4 672.4 243.1 674.9C241.7 677.4 238.9 682.5 238.2 685ZM251.2 691C252 692.5 253.8 688.7 255 688C256.2 687.3 257.5 686.7 258.8 687C260 687.3 261.9 689.5 262.5 690C263.1 690.5 262.6 690.2 262.5 690C262.4 689.8 262.1 688.8 262.1 688.5C262 688.3 263.4 691.6 262.1 688.5C260.7 685.5 255.8 673.4 254 670.3C252.1 667.2 251.3 668.4 250.7 669.8C250.1 671.2 250.2 675.3 250.3 678.8C250.4 682.3 250.5 689.5 251.2 691ZM265.4 681C266 681.7 264.3 678 263.7 676.5C263.1 675 261.7 672.2 262 672C262.3 671.8 265 674.5 265.6 675C266.2 675.5 265.7 675.1 265.6 675C265.5 674.9 265.1 674.4 265 674.3C264.9 674.2 266.4 675.9 265 674.3C263.6 672.7 258.1 666.2 256.7 664.7C255.3 663.2 256.1 664.2 256.8 665.4C257.4 666.7 259.1 669.8 260.5 672.4C262 675 264.9 680.3 265.4 681ZM272.5 675C274.3 675.4 274.6 672.9 275.7 671.8C276.8 670.7 277.9 668.9 278.9 668.6C280 668.3 281.2 669.3 282 670C282.8 670.7 283.9 672.2 284 672.5C284.1 672.8 285.3 673.1 282.5 671.9C279.7 670.7 270.7 666.7 267.1 665.2C263.6 663.8 262.1 663.3 261 663.1C260 663 260.2 663.4 260.9 664.4C261.6 665.5 263.2 667.7 265.2 669.5C267.1 671.2 270.7 674.6 272.5 675ZM290.8 673.5C289.5 672.4 293.6 673.2 294.4 674.1C295.3 674.9 295.3 677.2 295.8 678.8C296.2 680.3 296.8 682.4 297.1 683.4C297.4 684.5 297.3 684.6 297.5 685C297.7 685.4 297.2 685 298.4 685.6C299.6 686.1 302.6 688.3 304.8 688.6C307.1 688.9 310.9 687.8 312 687.3C313.1 686.9 313.2 687 311.6 685.9C310 684.8 305.9 682.8 302.4 680.7C298.9 678.6 292.1 674.6 290.8 673.5ZM296.2 692.5C294.7 693 295.6 695.5 295.5 697C295.4 698.5 295.4 699.9 295.8 701.2C296.3 702.6 297.9 704.4 298.3 705C298.8 705.6 298.2 705.1 298.3 705C298.5 704.9 299.1 704.7 299.3 704.6C299.4 704.6 297.6 705.8 299.3 704.6C300.9 703.5 307.4 699.2 309.2 697.8C311 696.4 310.9 696.9 310.1 696.3C309.4 695.7 307 694.6 304.7 694C302.4 693.4 297.8 692 296.2 692.5ZM298.5 712C297.2 713.1 298.1 714.8 298.8 715.8C299.4 716.9 301.5 717.4 302.5 718.3C303.5 719.3 304.4 720.6 304.6 721.7C304.8 722.8 303.7 724.6 303.8 725C303.8 725.4 303.1 726 304.7 724.3C306.3 722.6 311.7 717.3 313.4 715C315.2 712.7 315.1 711.4 315.1 710.6C315 709.7 314.6 710.3 313.3 710.1C311.9 710 309.2 709.1 306.7 709.5C304.3 709.8 299.8 710.9 298.5 712ZM305 732C304.1 733.7 307.4 734 308.8 735C310.1 736 311.8 736.9 313 738C314.2 739.1 315.2 741.1 315.7 741.7C316.1 742.3 315.5 741.8 315.7 741.7C315.8 741.5 316.4 740.8 316.5 740.6C316.6 740.5 315.3 743.2 316.5 740.6C317.7 738.1 322.7 728.3 323.6 725.3C324.6 722.2 323.7 722.6 322.1 722.5C320.5 722.5 316.9 723.5 314.1 725.1C311.2 726.7 305.9 730.3 305 732ZM314 750C313.2 752.2 316.8 751.7 318.2 752.5C319.7 753.3 321.3 754 322.5 755C323.7 756 325 757.5 325.7 758.2C326.4 758.9 326.5 759.4 326.8 759.3C327.1 759.2 326.6 759.9 327.6 757.8C328.7 755.7 331.9 750 333.1 746.5C334.2 742.9 334.5 738.3 334.3 736.4C334.1 734.5 333.6 734.6 331.7 735.1C329.7 735.5 325.7 736.7 322.8 739.2C319.8 741.7 314.8 747.8 314 750ZM332.5 765C331.6 767.7 334.3 767.5 334.2 768.8C334 770 332.1 771.3 331.7 772.5C331.2 773.7 331 774.9 331.4 775.7C331.9 776.5 333.7 777.3 334.3 777.1C334.9 777 334 778.5 335.2 775C336.4 771.5 340.3 759.8 341.5 756.2C342.7 752.5 341.8 754.4 342.4 753.3C342.9 752.1 345.1 749.5 344.7 749.4C344.2 749.3 341.7 750.1 339.7 752.7C337.7 755.3 333.4 762.3 332.5 765ZM343 779C342.8 781.8 346.9 776.9 347.5 777.5C348.1 778.1 346.6 781.1 346.6 782.6C346.6 784.1 347.4 786 347.5 786.7C347.6 787.3 347.4 787.1 347.5 786.7C347.6 786.3 348.2 784.7 348.3 784.3C348.4 783.9 347.4 788 348.3 784.3C349.1 780.5 352.3 766.3 353.4 761.7C354.4 757.1 355.4 756.8 354.6 756.7C353.9 756.5 350.8 757.1 348.9 760.8C347 764.5 343.2 776.2 343 779ZM355 790C354.8 792.9 357.5 788 358.8 787C360 786 361.1 784.4 362.5 784C363.9 783.6 366 784.5 367 784.6C368 784.7 368.2 785.1 368.5 784.8C368.8 784.5 368.7 785.6 368.9 782.6C369.1 779.6 370.4 770.1 369.9 766.7C369.4 763.3 367.3 762.5 366.1 762.3C364.9 762.1 363.8 764.2 362.8 765.4C361.8 766.6 361.4 765.3 360.1 769.5C358.8 773.6 355.2 787.1 355 790ZM371 792.5C371.2 795.8 374.3 791.8 375.9 791.4C377.6 791.1 379.7 791.2 380.9 790.4C382 789.6 382.6 787.6 383 786.7C383.4 785.8 383.2 785.6 383.2 785C383.3 784.4 383.2 785.6 383.3 782.9C383.4 780.2 383.9 771.1 383.8 768.7C383.7 766.3 383.4 768.3 382.8 768.4C382.1 768.6 381.3 769.2 380 769.8C378.7 770.4 376.5 768.1 375 771.9C373.5 775.6 370.8 789.2 371 792.5ZM386.8 782C387.3 785.1 389.6 785 391 785C392.4 785 393.7 783.1 394.9 782C396.1 780.9 397.5 779.6 398.4 778.5C399.2 777.4 399.8 776.3 400.1 775.5C400.4 774.7 400.4 776.5 400.2 773.9C400.1 771.4 400 762.4 399.4 760.1C398.8 757.8 397.9 759.6 396.7 760.1C395.6 760.6 393.9 762 392.5 763C391 764.1 388.8 763.5 387.8 766.7C386.9 769.8 386.3 778.9 386.8 782ZM406.8 772C407.8 773.7 409.8 771.3 411.1 770.5C412.3 769.7 413.2 767.9 414.2 767C415.3 766.1 416.8 765.2 417.2 764.9C417.8 764.5 417.3 765.1 417.2 764.9C417.2 764.7 417.1 763.9 417 763.7C417 763.5 418.1 765.9 417 763.7C416 761.6 412.5 753 410.7 750.9C409 748.9 407.5 749.8 406.5 751.3C405.5 752.8 404.9 756.6 404.9 760C405 763.5 405.7 770.3 406.8 772ZM423.5 771.8C424.4 774.8 424.9 775.9 426 776C427.1 776.1 428.8 773.4 429.9 772.4C431 771.4 432.2 770.6 432.5 770C432.8 769.4 433.5 771.2 431.9 768.5C430.2 765.8 424.4 756 422.5 753.7C420.7 751.4 421.1 753.9 420.8 754.6C420.5 755.3 420.4 755.1 420.8 758C421.3 760.8 422.6 768.7 423.5 771.8ZM437.9 764.6C439.2 766.4 440.1 763 441.5 763C442.9 763 445 764.4 446 764.5C447 764.6 447.6 763.9 447.8 763.5C447.9 763.1 448.7 764.8 446.9 762.1C445 759.5 438.8 750.7 436.5 747.5C434.2 744.4 433.7 742.7 433.2 743.4C432.7 744.2 432.6 748.7 433.4 752.2C434.2 755.7 436.5 762.8 437.9 764.6ZM449.2 754.5C450.4 755.2 449 750.8 450 750C451 749.2 453.3 750 455 750C456.7 750 458.8 750.4 460 750C461.2 749.6 462.3 748.1 462.5 747.5C462.7 746.9 463.6 748 461.3 746.6C459.1 745.1 451.8 740.8 448.9 738.9C445.9 736.9 445 735.1 443.5 734.9C442 734.7 440.1 735.7 440 737.6C440 739.4 441.5 743.2 443.1 746.1C444.6 748.9 448.1 753.8 449.2 754.5ZM463.5 740.5C465.1 740.6 463 737.6 463.6 736.4C464.1 735.2 465.7 734.3 466.8 733.2C467.9 732.1 469.3 731.4 470 730C470.7 728.6 470.8 725.8 471 725C471.2 724.2 471.3 725 471 725C470.7 725 469.7 724.8 469.5 724.7C469.2 724.7 472.4 724.4 469.5 724.7C466.6 725.1 455.6 726.1 451.9 726.7C448.1 727.3 447.7 727.7 446.9 728.5C446.2 729.3 446 730.2 447.2 731.5C448.4 732.7 451.4 734.6 454.1 736.1C456.8 737.6 461.9 740.4 463.5 740.5ZM465 719C467.3 718.4 467.9 717.2 468.8 716C469.6 714.8 470 713.2 470.3 711.7C470.7 710.1 470.7 707.8 470.8 706.7C470.9 705.6 471.2 705.2 471 705C470.8 704.8 471.5 704.5 469.4 705.6C467.3 706.6 461.6 709.3 458.3 711.3C455 713.3 451.3 716.2 449.8 717.5C448.4 718.7 448.5 718.5 449.4 718.8C450.2 719.1 452.5 719.4 455.1 719.4C457.7 719.4 462.7 719.6 465 719ZM467.4 697.9C469.4 696.3 466.5 695 466.8 693.5C467.1 692 469 690.4 469.2 689C469.4 687.6 468.4 685.9 468 685C467.6 684.1 467.4 683.8 467 683.8C466.6 683.7 467.4 683.1 465.4 684.9C463.4 686.7 457.4 691.9 455 694.6C452.5 697.3 452.1 699.5 450.9 701.1C449.6 702.8 446.9 704 447.6 704.3C448.3 704.6 451.8 703.9 455.1 702.8C458.4 701.8 465.5 699.4 467.4 697.9ZM465.8 677.5C468.4 675.2 467.5 675 468.4 673.8C469.2 672.5 469.8 670.3 471 670C472.2 669.7 474.2 671.4 475.5 672C476.8 672.6 477.7 673.1 478.5 673.3C479.3 673.6 477.3 673.4 480.5 673.7C483.6 673.9 501.6 678.1 497.3 675C493 671.9 462.3 657.8 454.8 655.1C447.3 652.4 452.7 653.3 452.3 658.7C451.9 664.2 450.3 684.6 452.6 687.7C454.8 690.9 463.1 679.8 465.8 677.5ZM481 682.5C479.2 683 485.4 683.8 486 685C486.6 686.2 484.9 688.1 484.8 689.5C484.7 690.9 485.1 692.8 485.2 693.5C485.3 694.2 484.9 693.5 485.2 693.5C485.5 693.5 486.6 693.3 486.8 693.2C487.1 693.2 483.5 694 486.8 693.2C490.2 692.4 503.2 690 506.8 688.5C510.3 687 509.6 685.3 508 684.3C506.3 683.3 501.3 682.6 496.8 682.3C492.3 682 482.8 682 481 682.5ZM489.6 700.9C487.4 702.7 488.5 704.5 489 706C489.5 707.5 491.6 708.8 492.6 709.9C493.6 711 494.4 712.2 495 712.5C495.6 712.8 494 713.9 496.4 711.6C498.7 709.4 507.2 701.8 509.1 698.9C510.9 696.1 508.8 695 507.7 694.4C506.6 693.8 505.3 694 502.3 695.1C499.3 696.2 491.8 699.1 489.6 700.9ZM502.9 711.7C501.8 713.6 503.6 715.1 504.2 716.7C504.7 718.2 505.2 719.8 506.1 721.1C506.9 722.3 508.6 723.6 509.3 724.3C510 725 510.1 725.4 510.4 725.4C510.6 725.3 510.2 726 511 723.8C511.7 721.7 513.6 715.7 514.7 712.3C515.8 708.8 517.2 704.6 517.5 702.9C517.9 701.1 518.1 701.2 517 701.5C515.9 701.9 513.3 703.1 511 704.8C508.6 706.5 504 709.7 502.9 711.7ZM518.5 725.5C518.3 727.8 520.4 726.8 521.1 727.9C521.9 729 522.1 730.9 522.9 732.1C523.6 733.4 524.7 734.8 525.8 735.5C526.8 736.2 528.6 736.4 529.2 736.2C529.8 736.1 529.4 737.8 529.3 734.3C529.2 730.9 528.8 719.5 528.5 715.6C528.3 711.7 528.1 712.1 528 710.7C527.9 709.4 528.8 706.9 527.9 707.5C527 708.1 524.2 711.3 522.6 714.3C521 717.3 518.7 723.2 518.5 725.5ZM537.5 737.5C538.8 740.1 541 736.3 542.6 736C544.2 735.7 545.9 735.4 547.3 735.8C548.8 736.2 550.7 737.9 551.3 738.3C552 738.8 551.4 738.7 551.3 738.3C551.3 738 551 736.6 550.9 736.2C550.8 735.9 552.1 739.9 550.9 736.2C549.6 732.5 545.5 717.8 543.4 714.2C541.4 710.5 540.1 713.3 538.7 714.3C537.2 715.4 534.9 716.7 534.7 720.6C534.5 724.5 536.2 734.9 537.5 737.5ZM558.2 737.5C560.1 740.2 561 735.3 562.5 735C564 734.7 566.1 735.4 567.5 735.5C568.9 735.6 570.5 736.1 570.8 735.8C571.2 735.5 571.9 737 569.7 733.7C567.5 730.4 560.4 718.9 557.5 715.9C554.6 712.9 553.5 714.9 552.5 715.4C551.4 715.9 550.2 715.2 551.2 718.9C552.2 722.6 556.4 734.8 558.2 737.5ZM576.5 731.2C578.8 733.8 579 729.2 580.3 728.3C581.7 727.4 583.6 726.7 584.6 725.8C585.5 725 586 724 586 723.3C586 722.6 587.1 724 584.5 721.6C581.9 719.2 573.1 711 570.3 709.1C567.5 707.2 568.5 709.6 567.9 710.2C567.2 710.8 565 709.3 566.4 712.8C567.9 716.3 574.2 728.6 576.5 731.2ZM586 716.7C588.3 718.2 586.9 713.5 587.6 712C588.3 710.5 589.1 708.1 590 707.5C590.9 706.9 592.8 708.6 593 708.5C593.2 708.4 594.7 709.8 591.5 707.2C588.3 704.6 576.7 694.7 573.7 692.7C570.7 690.7 573.3 693.6 573.3 695.2C573.4 696.9 571.8 699.1 574 702.7C576.1 706.3 583.7 715.1 586 716.7ZM600.8 706.2C604.1 707.4 603.6 704 604 702.5C604.4 701 603.4 698.8 603.1 697.4C602.9 696 602.9 694.7 602.5 694C602.1 693.3 603.8 694.3 600.8 692.9C597.8 691.5 587.2 685.8 584.6 685.5C582 685.1 585.4 689.3 585.3 690.9C585.1 692.6 581 693.1 583.6 695.6C586.2 698.2 597.4 705.1 600.8 706.2ZM610 695C613.4 696 612 692.5 613 691.2C614 690 615.7 688.9 616 687.5C616.3 686.1 614.9 683.6 614.7 682.8C614.5 682 615.1 682.9 614.7 682.8C614.3 682.7 612.8 682.3 612.4 682.2C612.1 682.1 615.3 682.4 612.4 682.2C609.5 682 598.3 680.7 595 680.8C591.8 680.9 593.2 681.9 592.8 682.6C592.3 683.4 589.6 683.3 592.5 685.4C595.3 687.4 606.6 694 610 695ZM614 675.8C617.9 677.1 617 678 618.5 678.2C620 678.4 621.8 677.5 623 677C624.2 676.5 625.9 675.5 626 675C626.1 674.5 627.3 674.9 623.3 674.2C619.3 673.6 606.2 671.2 601.9 670.8C597.6 670.4 598.6 672 597.4 671.9C596.2 671.9 592.1 669.9 594.9 670.6C597.7 671.2 610.1 674.5 614 675.8ZM625.2 666.7C629.1 666.7 626.4 663.6 627.5 662.5C628.6 661.4 630.1 660.5 631.7 660.2C633.2 659.9 635.8 660.6 636.7 660.7C637.5 660.8 637.2 660.8 636.7 660.7C636.2 660.5 634.1 660 633.6 659.9C633.1 659.8 637.5 660.5 633.6 659.9C629.7 659.3 614.6 656.5 610 656.2C605.4 655.9 607 657.1 605.9 658.1C604.9 659.1 600.4 660.7 603.6 662.2C606.8 663.6 621.2 666.6 625.2 666.7ZM642.7 655.3C645.8 656.7 643.6 652.5 643.4 651.1C643.3 649.6 642.3 648.2 641.7 646.8C641.1 645.4 639.8 643.4 640 642.5C640.2 641.6 642.8 642.1 643 641.7C643.2 641.2 644.1 642 640.9 639.6C637.7 637.3 626.4 628.9 623.8 627.6C621.3 626.3 624.9 630.5 625.5 631.9C626 633.4 627.3 634.4 627.1 636.3C627 638.1 621.9 639.7 624.5 642.9C627.1 646.1 639.5 654 642.7 655.3ZM649 637C649.1 639.9 649.5 633.9 649 632.5C648.5 631.1 647.2 630 646.3 628.8C645.4 627.5 644 625.6 643.6 625C643.2 624.4 643.6 625.4 643.6 625C643.6 624.6 643.8 623.2 643.8 622.8C643.8 622.4 643.3 625.5 643.8 622.8C644.3 620.1 646.1 608.8 646.9 606.8C647.6 604.7 648.1 609.1 648.4 610.5C648.6 611.9 648.3 610.6 648.4 615C648.5 619.4 648.9 634.1 649 637ZM641.7 619.7C641.9 622.1 644.7 618.6 645.8 617.5C646.9 616.4 647.7 614.5 648.3 613C649 611.5 649.4 609.2 649.6 608.5C649.8 607.8 649.6 608.7 649.6 608.5C649.6 608.3 649.5 607.4 649.5 607.1C649.5 606.9 649.8 609.7 649.5 607.1C649.2 604.6 648.2 593.8 647.8 591.8C647.3 589.9 647.4 593.6 646.8 595.5C646.2 597.4 645 599.1 644.2 603.1C643.3 607.1 641.4 617.3 641.7 619.7ZM648.9 600.4C649.7 601.4 652 599.4 653.2 598.7C654.3 597.9 655.4 597.2 655.8 595.9C656.1 594.6 655.6 592.4 655 591C654.4 589.6 652.7 587.9 652.2 587.2C651.7 586.6 652.2 587.3 652.2 587.2C652.1 587.2 652 587 652 586.9C651.9 586.9 652.2 587.3 652 586.9C651.7 586.6 650.8 585.3 650.5 585C650.1 584.6 649.9 584.7 649.7 585.1C649.6 585.4 649.6 585.6 649.4 586.9C649.2 588.2 648.5 590.7 648.4 593C648.3 595.2 648.1 599.5 648.9 600.4Z" fill="#b6b6b6" stroke="#8a8a8a" stroke-width="0.400"/>
<path d="M452 640C454.5 637 466 638.7 470 642C474 645.3 476 655 476 660C476 665 472.3 668 470 672C467.7 676 462.3 679.3 462 684C461.7 688.7 468 695.3 468 700C468 704.7 464 712 462 712C460 712 456.7 705.3 456 700C455.3 694.7 458.2 686.7 458 680C457.8 673.3 456 666.7 455 660C454 653.3 449.5 643 452 640Z" fill="#b6b6b6" stroke="#8a8a8a" stroke-width="0.4" stroke-linejoin="round"/>
<path d="M476 636C475 636.7 481.3 644.7 482 650C482.7 655.3 478.7 663.7 480 668C481.3 672.3 487 672.3 490 676C493 679.7 497.3 692 498 690C498.7 688 495.7 671.3 494 664C492.3 656.7 491 650.7 488 646C485 641.3 477 635.3 476 636Z" fill="#b6b6b6" stroke="#8a8a8a" stroke-width="0.4" stroke-linejoin="round"/>
<path d="M262 672C261.7 669.7 266.7 663 270 660C273.3 657 278.7 654 282 654C285.3 654 287.7 657 290 660C292.3 663 296.3 670.7 296 672C295.7 673.3 290.7 669 288 668C285.3 667 282.7 665 280 666C277.3 667 275 673 272 674C269 675 262.3 674.3 262 672Z" fill="#b6b6b6" stroke="#8a8a8a" stroke-width="0.4" stroke-linejoin="round"/>
<path d="M184 509C181.6 510.6 175.4 511.4 175 515C174.6 518.6 184.5 520.1 182.5 522.5C180.5 524.9 168.4 521.7 167.5 524C166.6 526.3 178.1 526.5 179 531C179.9 535.5 171.4 535.9 171 541C170.6 546.1 173.1 547.3 177.5 550C181.9 552.7 187.1 547.7 187.5 551C187.9 554.3 179.7 556.8 179 562.5C178.3 568.2 184.7 567.8 185 572.5C185.3 577.2 180.3 576 180 580C179.7 584 184.3 583.5 184 587.5C183.7 591.5 178.1 591 179 595C179.9 599 185.6 595.8 187.5 602.5C189.4 609.2 184.3 614.7 186 620C187.7 625.3 193.2 619.2 194 622.5C194.8 625.8 189.4 627.8 189 632.5C188.6 637.2 189.6 637.3 192.5 640C195.4 642.7 198.7 639.6 200 642.5C201.3 645.4 196.4 647.4 197.5 651C198.6 654.6 200 655.2 204 656C208 656.8 211.6 652.3 212.5 654C213.4 655.7 207.1 658.5 207.5 662.5C207.9 666.5 210 667.7 214 669C218 670.3 221.2 665.6 222.5 667.5C223.8 669.4 217.7 671.6 219 676C220.3 680.4 222.6 682.9 227.5 684C232.4 685.1 234.4 678.4 237.5 680C240.6 681.6 236.3 686.3 239 690C241.7 693.7 242.6 695.1 247.5 694C252.4 692.9 253.5 687.1 257.5 686C261.5 684.9 260.2 690.9 262.5 690C264.8 689.1 266.1 687.3 266 682.5C265.9 677.7 261.5 673.5 262 672C262.5 670.5 265.2 676.2 268 677C270.8 677.8 269.3 677.5 272.5 675C275.7 672.5 276.4 667.5 280 667.5C283.6 667.5 282.3 673.7 286 675C289.7 676.3 290.9 669.8 294 672.5C297.1 675.2 297.2 677.7 297.5 685C297.8 692.3 294.3 694 295 700C295.7 706 299.3 703.5 300 707.5C300.7 711.5 296.2 711.7 297.5 715C298.8 718.3 303.7 716 305 720C306.3 724 301.2 725.7 302.5 730C303.8 734.3 306.4 733.3 310 736C313.6 738.7 314.9 736.3 316 740C317.1 743.7 312.3 746 314 750C315.7 754 318.2 751.7 322.5 755C326.8 758.3 326.7 759.2 330 762.5C333.3 765.8 335 764.2 335 767.5C335 770.8 328.7 771.7 330 775C331.3 778.3 335.3 779.3 340 780C344.7 780.7 345.9 775.9 347.5 777.5C349.1 779.1 344 782.7 346 786C348 789.3 350.6 790.5 355 790C359.4 789.5 358.5 785.3 362.5 784C366.5 782.7 367.7 782.7 370 785C372.3 787.3 367.7 791.2 371 792.5C374.3 793.8 379 793.3 382.5 790C386 786.7 381.7 781.3 384 780C386.3 778.7 387.4 785 391 785C394.6 785 394.8 782.9 397.5 780C400.2 777.1 397 776.7 401 774C405 771.3 408.5 772.7 412.5 770C416.5 767.3 413.7 764.7 416 764C418.3 763.3 418.3 764.3 421 767.5C423.7 770.7 422.9 775.3 426 776C429.1 776.7 428.8 773.6 432.5 770C436.2 766.4 436 763.8 440 762.5C444 761.2 444.8 768.3 447.5 765C450.2 761.7 446.7 754 450 750C453.3 746 456 751.3 460 750C464 748.7 464.3 748.3 465 745C465.7 741.7 461.2 741.5 462.5 737.5C463.8 733.5 467.7 733.3 470 730C472.3 726.7 472.3 727.9 471 725C469.7 722.1 465.3 721.7 465 719C464.7 716.3 468.4 718.7 470 715C471.6 711.3 472.1 710.3 471 705C469.9 699.7 466.3 699.7 466 695C465.7 690.3 470.5 691.5 470 687.5C469.5 683.5 463.7 684.7 464 680C464.3 675.3 466.7 671.6 471 670C475.3 668.4 477.3 670.7 480 674C482.7 677.3 479.4 679.6 481 682.5C482.6 685.4 485.2 682.3 486 685C486.8 687.7 482.9 689.2 484 692.5C485.1 695.8 488.7 693.9 490 697.5C491.3 701.1 487.7 702 489 706C490.3 710 491.4 711.4 495 712.5C498.6 713.6 499.8 708 502.5 710C505.2 712 502.3 715.3 505 720C507.7 724.7 508.5 726.2 512.5 727.5C516.5 728.8 516.9 723 520 725C523.1 727 522 732.1 524 735C526 737.9 523.9 735.3 527.5 736C531.1 736.7 532.6 737.8 537.5 737.5C542.4 737.2 541.6 734.3 546 735C550.4 735.7 549.6 740 554 740C558.4 740 557.6 736.1 562.5 735C567.4 733.9 568.5 737.3 572.5 736C576.5 734.7 573.9 732.9 577.5 730C581.1 727.1 583.7 729 586 725C588.3 721 584.9 719.7 586 715C587.1 710.3 586.9 708.8 590 707.5C593.1 706.2 593.8 711.3 597.5 710C601.2 708.7 602.7 706.8 604 702.5C605.3 698.2 600.9 696 602.5 694C604.1 692 606.4 696.7 610 695C613.6 693.3 615.3 692.8 616 687.5C616.7 682.2 611.4 677.3 612.5 675C613.6 672.7 616.4 679 620 679C623.6 679 624.7 678.7 626 675C627.3 671.3 623.9 669 625 665C626.1 661 626 661.1 630 660C634 658.9 636.3 663 640 661C643.7 659 644 657.4 644 652.5C644 647.6 638.7 645.8 640 642.5C641.3 639.2 646.6 642.7 649 640C651.4 637.3 651.4 637.8 649 632.5C646.6 627.2 641.1 623.6 640 620C638.9 616.4 642.3 621.7 645 619C647.7 616.3 649.3 614.8 650 610C650.7 605.2 645.9 604.3 647.5 601C649.1 597.7 654 600.2 656 597.5C658 594.8 657.3 595.4 655 591C652.7 586.6 649.5 583.7 647.5 581" fill="none" stroke="#6c6c6c" stroke-width="0.800"/>
<path clip-path="url(#pc)" d="M182.5 522.5C182.9 521.5 184.5 519 184.8 516.8C185 514.5 184.1 510.3 184 509M171 541C172.3 538.5 176.8 531.3 179 526C181.2 520.7 183.2 511.8 184 509M179 562.5C181.9 563.1 191.2 565.2 196.5 566C201.8 566.8 208.6 567.2 211 567.5M184 587.5C186.3 587.9 193.6 589.6 197.7 590.1C201.8 590.6 206.6 590.6 208.4 590.7M186 620C188.1 619.7 195 619.2 198.8 618.3C202.5 617.4 206.9 615.2 208.5 614.6M192.5 640C194.4 639.2 200.8 637.2 204.2 635.3C207.6 633.4 211.4 629.7 212.9 628.6M204 656C205.7 655 211.2 652.5 214.1 650.2C216.9 648 220 643.7 221.1 642.4M214 669C215.4 667.6 220 663.7 222.3 660.6C224.6 657.5 226.8 651.9 227.6 650.2M227.5 684C228.7 682 233 676.4 235 672.2C236.9 667.9 238.7 660.6 239.4 658.3M247.5 694C247.9 691.5 249.5 684.5 249.8 679.2C250 674 249.1 665.3 249 662.5M266 682.5C265.2 680.9 263.5 676.3 261.5 672.8C259.5 669.2 255.2 663 254 661M272.5 675C271.2 674 267.8 671.3 264.8 669C261.7 666.7 255.8 662.3 254 661M294 672.5C296.3 674.2 303.8 679.7 308 682.8C312.2 685.8 317.2 689.6 319 691M300 707.5C301.8 707.2 307.5 706.6 310.5 705.6C313.5 704.7 316.8 702.4 318 701.8M302.5 730C304.6 728.8 311.5 725.7 315.2 723.1C319 720.4 323.4 715.7 325 714.2M314 750C316 748 322.6 742.2 326.2 737.9C329.7 733.5 333.8 726.1 335.3 723.8M335 767.5C336.7 765 342.3 757.7 345.2 752.2C348.2 746.8 351.3 737.9 352.5 735M347.5 777.5C348.9 774.4 353.5 765.3 355.8 758.7C358 752.1 360.2 741.3 361.1 737.9M362.5 784C363.3 780.5 366.4 770.5 367.6 763.2C368.8 755.9 369.3 744.2 369.7 740.4M382.5 790C383 786.2 384.8 775.3 385.2 767.5C385.7 759.7 385 747.1 385 743M397.5 780C398 777.2 399.9 769 400.4 762.9C400.9 756.9 400.3 747.1 400.3 743.9M416 764C415.8 762.4 415.9 757.8 415 754.1C414.2 750.5 411.7 744.3 411.1 742.3M432.5 770C431.7 767.7 429.7 761.1 427.5 756.1C425.4 751.1 420.9 742.8 419.6 740.2M450 750C449 748.6 446.6 744.9 444.2 741.9C441.8 738.9 436.9 733.5 435.4 731.8M462.5 737.5C460.8 737 456.2 735.7 452.2 734.2C448.3 732.8 441.2 729.9 439 729M465 719C463.2 719.2 458.5 720.3 454.5 720.5C450.5 720.7 443.2 720.1 441 720M466 695C463.9 696.4 458 701 453.2 703.5C448.5 706 440.1 708.9 437.5 710M471 670C468.5 667.6 461.6 660.9 456.1 655.8C450.6 650.8 441.2 642.4 438.2 639.7M486 685C488.9 685.1 498.2 685.7 503.5 685.5C508.8 685.3 515.6 684.2 518 684M489 706C491.7 704.7 500.2 701 505 698C509.8 695 515.8 689.7 518 688M505 720C506.7 718.1 512.3 712.7 515.2 708.5C518.2 704.3 521.3 697.2 522.5 695M524 735C524.8 732.1 527.8 723.7 529 717.5C530.2 711.3 530.7 701.2 531 698M546 735C545.8 732 545.6 723.1 544.6 716.7C543.6 710.3 540.9 699.8 540.2 696.4M572.5 736C570.9 732.5 566.6 722.3 562.8 715C559.1 707.7 552.3 695.8 550.2 692M586 715C584 712.7 578.5 706.2 574 701.2C569.6 696.3 561.6 688.1 559.1 685.5M604 702.5C601 700.7 592.5 695.5 586 691.5C579.6 687.5 568.6 680.7 565.1 678.5M616 687.5C612.3 686.4 601.8 683.5 594 681C586.2 678.5 573.2 673.9 569 672.5M626 675C621.8 673.9 609.7 671 600.8 668.5C591.8 666 577.2 661.4 572.5 660M640 661C634.9 659.9 620 656.8 609.2 654.2C598.5 651.6 581.1 646.9 575.5 645.4M649 640C649.1 635.2 650 621.3 649.8 611.5C649.5 601.7 647.9 586.1 647.5 581M645 619C645.5 616 647.3 607.3 647.8 601C648.2 594.7 647.5 584.3 647.5 581M656 597.5C655.5 596.3 654.7 593 653.2 590.2C651.8 587.5 648.5 582.5 647.5 581" fill="none" stroke="#a4a4a4" stroke-width="0.500"/>
<path d="M337 426C332.4 427.5 333.8 434.8 332.5 439C331.2 443.2 330.6 447 329.5 451C328.4 455 323.6 460.3 326 463C328.4 465.7 340.2 468.5 344 467C347.8 465.5 347.2 458.2 349 454C350.8 449.8 353.2 446 355 442C356.8 438 363 432.7 360 430C357 427.3 341.6 424.5 337 426Z" fill="#fff3d9" stroke="#4a4448" stroke-width="0.6" stroke-linejoin="round"/>
<g clip-path="url(#pc)" fill="none" stroke="#a85a24" stroke-width="9.200" stroke-linecap="round" stroke-dasharray="0.010 7.600" stroke-dashoffset="-4"><path d="M184 509C185.7 507.9 190 503.5 194.4 502.1C198.8 500.8 205.7 500.4 210.5 501.1C215.3 501.8 220.2 503.8 223.2 506.4C226.2 509.1 227.7 513 228.4 517C229.1 521.1 228.2 526.2 227.3 530.7C226.5 535.1 224.7 539.4 223.2 543.7C221.7 547.9 219.7 552.1 218.2 556.2C216.7 560.2 215.2 564.2 214.3 568.2C213.4 572.3 213.4 575.9 212.9 580.4C212.4 584.9 211.6 589.9 211.4 595.2C211.1 600.5 210.9 607.4 211.4 612.2C211.8 616.9 212.7 619.9 214.2 623.8C215.7 627.7 218 631.9 220.4 635.7C222.8 639.5 225.3 643.5 228.4 646.6C231.5 649.7 235.7 652.5 239.2 654.6C242.8 656.7 247.4 658.6 249.7 659.2C252 659.7 252.5 658 253 657.7"/><path d="M284.2 621C286.3 622.2 292.7 625.3 296.9 628.2C301.2 631.1 305.4 634.7 309.7 638.4C314 642.1 319.1 646.1 322.6 650.3C326.1 654.5 328.9 659.5 330.6 663.7C332.3 667.9 333.3 671.6 332.9 675.4C332.4 679.3 329.7 683.9 327.8 686.9C326 689.8 323 691.7 321.6 693.2C320.2 694.6 319.2 693.7 319.4 695.8C319.6 697.9 321.2 702.7 323 705.9C324.7 709.1 326.7 712 329.9 715.1C333.1 718.2 337.9 721.9 341.9 724.7C346 727.5 349.5 729.9 353.9 731.9C358.3 733.9 363.1 735.4 368.3 736.7C373.6 738 379.7 739 385.4 739.6C391 740.3 397.1 740.9 402.3 740.6C407.5 740.3 412.2 739 416.6 737.7C420.9 736.5 425.1 734.8 428.3 733C431.6 731.3 434.7 729.2 436.2 727.1C437.7 724.9 437.9 722.8 437.6 720.3C437.3 717.7 436.3 714.7 434.5 711.6C432.8 708.6 429.5 705.3 427.2 701.9C424.9 698.5 422.5 695.4 420.9 691.3C419.2 687.3 417.3 682.6 417.1 677.6C416.9 672.6 417.9 666.7 419.8 661.4C421.6 656 424.8 650.4 428.2 645.5C431.7 640.7 435.7 636.2 440.4 632.4C445.1 628.6 450.6 624.7 456.4 622.8C462.2 620.8 469.2 620.6 475 620.6C480.8 620.6 485.6 621.2 490.9 622.7C496.2 624.2 502.2 626.7 506.8 629.6C511.5 632.6 515.8 636.4 518.8 640.5C521.7 644.7 523.6 649.9 524.4 654.5C525.1 659 523.9 663.6 523.4 667.9C522.9 672.2 521.7 677.1 521.4 680.3C521 683.5 520.7 685 521.3 687C521.8 689 522.9 691 524.6 692.3C526.2 693.6 528.4 694.5 531.2 694.6C534 694.7 537.9 694 541.4 692.8C544.9 691.6 549 689.3 552.1 687.2C555.2 685.1 557.6 683 559.9 680.3C562.2 677.6 564.3 674.6 565.9 671.1C567.4 667.6 568.2 663.3 569.2 659.2C570.2 655.1 570.7 651 571.7 646.8C572.6 642.5 573.2 638.2 574.8 633.8C576.4 629.5 578.8 624.7 581.1 620.8C583.3 616.9 585.6 613.8 588.3 610.4C591.1 606.9 594.3 603.6 597.5 600.2C600.8 596.8 604.3 593.2 607.7 590C611.1 586.9 614.5 583.9 618 581.3C621.4 578.7 624.6 575.9 628.5 574.5C632.3 573 638.9 572.8 641 572.5"/></g>
<g clip-path="url(#pc)" fill="none" stroke="#f48a3a" stroke-width="8.200" stroke-linecap="round" stroke-dasharray="0.010 7.600" stroke-dashoffset="-4"><path d="M184 509C185.7 507.9 190 503.5 194.4 502.1C198.8 500.8 205.7 500.4 210.5 501.1C215.3 501.8 220.2 503.8 223.2 506.4C226.2 509.1 227.7 513 228.4 517C229.1 521.1 228.2 526.2 227.3 530.7C226.5 535.1 224.7 539.4 223.2 543.7C221.7 547.9 219.7 552.1 218.2 556.2C216.7 560.2 215.2 564.2 214.3 568.2C213.4 572.3 213.4 575.9 212.9 580.4C212.4 584.9 211.6 589.9 211.4 595.2C211.1 600.5 210.9 607.4 211.4 612.2C211.8 616.9 212.7 619.9 214.2 623.8C215.7 627.7 218 631.9 220.4 635.7C222.8 639.5 225.3 643.5 228.4 646.6C231.5 649.7 235.7 652.5 239.2 654.6C242.8 656.7 247.4 658.6 249.7 659.2C252 659.7 252.5 658 253 657.7"/><path d="M284.2 621C286.3 622.2 292.7 625.3 296.9 628.2C301.2 631.1 305.4 634.7 309.7 638.4C314 642.1 319.1 646.1 322.6 650.3C326.1 654.5 328.9 659.5 330.6 663.7C332.3 667.9 333.3 671.6 332.9 675.4C332.4 679.3 329.7 683.9 327.8 686.9C326 689.8 323 691.7 321.6 693.2C320.2 694.6 319.2 693.7 319.4 695.8C319.6 697.9 321.2 702.7 323 705.9C324.7 709.1 326.7 712 329.9 715.1C333.1 718.2 337.9 721.9 341.9 724.7C346 727.5 349.5 729.9 353.9 731.9C358.3 733.9 363.1 735.4 368.3 736.7C373.6 738 379.7 739 385.4 739.6C391 740.3 397.1 740.9 402.3 740.6C407.5 740.3 412.2 739 416.6 737.7C420.9 736.5 425.1 734.8 428.3 733C431.6 731.3 434.7 729.2 436.2 727.1C437.7 724.9 437.9 722.8 437.6 720.3C437.3 717.7 436.3 714.7 434.5 711.6C432.8 708.6 429.5 705.3 427.2 701.9C424.9 698.5 422.5 695.4 420.9 691.3C419.2 687.3 417.3 682.6 417.1 677.6C416.9 672.6 417.9 666.7 419.8 661.4C421.6 656 424.8 650.4 428.2 645.5C431.7 640.7 435.7 636.2 440.4 632.4C445.1 628.6 450.6 624.7 456.4 622.8C462.2 620.8 469.2 620.6 475 620.6C480.8 620.6 485.6 621.2 490.9 622.7C496.2 624.2 502.2 626.7 506.8 629.6C511.5 632.6 515.8 636.4 518.8 640.5C521.7 644.7 523.6 649.9 524.4 654.5C525.1 659 523.9 663.6 523.4 667.9C522.9 672.2 521.7 677.1 521.4 680.3C521 683.5 520.7 685 521.3 687C521.8 689 522.9 691 524.6 692.3C526.2 693.6 528.4 694.5 531.2 694.6C534 694.7 537.9 694 541.4 692.8C544.9 691.6 549 689.3 552.1 687.2C555.2 685.1 557.6 683 559.9 680.3C562.2 677.6 564.3 674.6 565.9 671.1C567.4 667.6 568.2 663.3 569.2 659.2C570.2 655.1 570.7 651 571.7 646.8C572.6 642.5 573.2 638.2 574.8 633.8C576.4 629.5 578.8 624.7 581.1 620.8C583.3 616.9 585.6 613.8 588.3 610.4C591.1 606.9 594.3 603.6 597.5 600.2C600.8 596.8 604.3 593.2 607.7 590C611.1 586.9 614.5 583.9 618 581.3C621.4 578.7 624.6 575.9 628.5 574.5C632.3 573 638.9 572.8 641 572.5"/></g>
<path d="M184 509C184.4 508.9 190 503.5 194.4 502.1C198.8 500.8 205.7 500.4 210.5 501.1C215.3 501.8 220.2 503.8 223.2 506.4C226.2 509.1 227.7 513 228.4 517C229.1 521.1 228.2 526.2 227.3 530.7C226.5 535.1 224.7 539.4 223.2 543.7C221.7 547.9 219.7 552.1 218.2 556.2C216.7 560.2 215.2 564.2 214.3 568.2C213.4 572.3 213.4 575.9 212.9 580.4C212.4 584.9 211.6 589.9 211.4 595.2C211.1 600.5 210.9 607.4 211.4 612.2C211.8 616.9 212.7 619.9 214.2 623.8C215.7 627.7 218 631.9 220.4 635.7C222.8 639.5 225.3 643.5 228.4 646.6C231.5 649.7 235.7 652.5 239.2 654.6C242.8 656.7 247.4 658.6 249.7 659.2C252 659.7 251 660.5 253 657.7C255.1 655 258.2 648.3 262 642.5C265.8 636.7 272.3 626.6 276 623C279.7 619.4 280.7 620.2 284.2 621C287.6 621.9 292.7 625.3 296.9 628.2C301.2 631.1 305.4 634.7 309.7 638.4C314 642.1 319.1 646.1 322.6 650.3C326.1 654.5 328.9 659.5 330.6 663.7C332.3 667.9 333.3 671.6 332.9 675.4C332.4 679.3 329.7 683.9 327.8 686.9C326 689.8 323 691.7 321.6 693.2C320.2 694.6 319.2 693.7 319.4 695.8C319.6 697.9 321.2 702.7 323 705.9C324.7 709.1 326.7 712 329.9 715.1C333.1 718.2 337.9 721.9 341.9 724.7C346 727.5 349.5 729.9 353.9 731.9C358.3 733.9 363.1 735.4 368.3 736.7C373.6 738 379.7 739 385.4 739.6C391 740.3 397.1 740.9 402.3 740.6C407.5 740.3 412.2 739 416.6 737.7C420.9 736.5 425.1 734.8 428.3 733C431.6 731.3 434.7 729.2 436.2 727.1C437.7 724.9 437.9 722.8 437.6 720.3C437.3 717.7 436.3 714.7 434.5 711.6C432.8 708.6 429.5 705.3 427.2 701.9C424.9 698.5 422.5 695.4 420.9 691.3C419.2 687.3 417.3 682.6 417.1 677.6C416.9 672.6 417.9 666.7 419.8 661.4C421.6 656 424.8 650.4 428.2 645.5C431.7 640.7 435.7 636.2 440.4 632.4C445.1 628.6 450.6 624.7 456.4 622.8C462.2 620.8 469.2 620.6 475 620.6C480.8 620.6 485.6 621.2 490.9 622.7C496.2 624.2 502.2 626.7 506.8 629.6C511.5 632.6 515.8 636.4 518.8 640.5C521.7 644.7 523.6 649.9 524.4 654.5C525.1 659 523.9 663.6 523.4 667.9C522.9 672.2 521.7 677.1 521.4 680.3C521 683.5 520.7 685 521.3 687C521.8 689 522.9 691 524.6 692.3C526.2 693.6 528.4 694.5 531.2 694.6C534 694.7 537.9 694 541.4 692.8C544.9 691.6 549 689.3 552.1 687.2C555.2 685.1 557.6 683 559.9 680.3C562.2 677.6 564.3 674.6 565.9 671.1C567.4 667.6 568.2 663.3 569.2 659.2C570.2 655.1 570.7 651 571.7 646.8C572.6 642.5 573.2 638.2 574.8 633.8C576.4 629.5 578.8 624.7 581.1 620.8C583.3 616.9 585.6 613.8 588.3 610.4C591.1 606.9 594.3 603.6 597.5 600.2C600.8 596.8 604.3 593.2 607.7 590C611.1 586.9 614.5 583.9 618 581.3C621.4 578.7 624.6 575.9 628.5 574.5C632.3 573 641.4 575.6 641 572.5C640.6 569.4 631.5 561.5 626 556C620.5 550.5 615 545.5 608 539.5C601 533.5 592 526.2 584 520C576 513.8 569 508.5 560 502C551 495.5 540 488 530 481C520 474 509 466.5 500 460C491 453.5 482.8 446.5 476 442C469.2 437.5 467.2 434 459.5 433C451.8 432 441.2 435.2 430 436C418.8 436.8 399.5 436.8 392 437.5C384.5 438.2 388.7 438.8 385 440.5C381.3 442.2 375 445.2 370 448C365 450.8 359.3 454.2 355 457C350.7 459.8 347.2 463 344 464.5C340.8 466 338.8 466.5 336 466C333.2 465.5 329.8 462.8 327 461.5C324.2 460.2 321.8 458.8 319 458.5C316.2 458.2 313.2 459.2 310 460C306.8 460.8 306.7 461.7 300 463.5C293.3 465.3 279.2 468.4 270 471C260.8 473.6 252.9 476.2 245 479C237.1 481.8 229.6 484.7 222.5 487.5C215.4 490.3 207.6 493.4 202.5 496C197.4 498.6 195.1 500.8 192 503C188.9 505.2 183.6 509.1 184 509Z" fill="#fdd1fd" stroke="#8a6a8c" stroke-width="0.6" stroke-linejoin="round"/>
<path d="M254 661C252.9 658.8 249.4 651.8 247.5 647.5C245.6 643.2 243.7 639.2 242.5 635C241.3 630.8 240.2 626.5 240.5 622.5C240.8 618.5 241.2 613.2 244 611C246.8 608.8 253.2 608.3 257.5 609C261.8 609.7 265.8 612.5 270 615C274.2 617.5 280.4 622.5 282.5 624" fill="none" stroke="#a85a24" stroke-width="4.600" stroke-linecap="round" stroke-dasharray="0.010 4.800"/>
<path d="M254 661C252.9 658.8 249.4 651.8 247.5 647.5C245.6 643.2 243.7 639.2 242.5 635C241.3 630.8 240.2 626.5 240.5 622.5C240.8 618.5 241.2 613.2 244 611C246.8 608.8 253.2 608.3 257.5 609C261.8 609.7 265.8 612.5 270 615C274.2 617.5 280.4 622.5 282.5 624" fill="none" stroke="#f48a3a" stroke-width="3.800" stroke-linecap="round" stroke-dasharray="0.010 4.800"/>
<path d="M400 470C396.7 481.7 388.3 515 380 540C371.7 565 357.5 596.7 350 620C342.5 643.3 337.5 670 335 680M425 470C425.5 485 428.8 531.7 428 560C427.2 588.3 421.3 626.7 420 640M470 470C476.7 481.7 498.3 518.3 510 540C521.7 561.7 531.7 581.7 540 600C548.3 618.3 556.7 641.7 560 650M300 520C295 526.7 278.3 548.3 270 560C261.7 571.7 253.3 585 250 590M500 500C510 510 543.3 543.3 560 560C576.7 576.7 593.3 593.3 600 600M420 650L417 700M330 500L300 540M440 450L455 480M410 446L408 470" fill="none" stroke="#b79ab8" stroke-width="0.7" stroke-linecap="round"/>
<path d="M521 388C527.8 388.4 539 394 548 400C557 406 559.4 410.8 566 418C572.6 425.2 576.2 430.3 581 436C585.8 441.7 584.6 443.8 590 446.5C595.4 449.2 600.2 448.9 608 449.5C615.8 450.1 624.6 449 629 449.5C633.4 450 631.8 451.1 630 452C628.2 452.9 620.1 453.2 620 454C619.9 454.8 628.1 454.9 629.5 456C630.9 457.1 629.5 459.2 627 459.5C624.5 459.8 617.5 457 617 457.5C616.5 458 623.3 460.3 624.5 462C625.7 463.7 626.3 466.6 623 466C619.7 465.4 610.1 459.2 608 459C605.9 458.8 611.9 463 612.5 465C613.1 467 613.3 469.9 611 469C608.7 468.1 605 461.5 601 460.5C597 459.5 592 460.9 591 464C590 467.1 595.3 472.6 596 476C596.7 479.4 596.3 481.8 594.5 481C592.7 480.2 590.3 475.6 587 472C583.7 468.4 581 466.9 578 463C575 459.1 575.6 456.7 572 452.5C568.4 448.3 566.6 448 560 442C553.4 436 546.5 430.1 539 422.5C531.5 414.9 527.5 408.9 522.5 404C517.5 399.1 514.3 401.2 514 398C513.7 394.8 514.2 387.6 521 388Z" fill="#fff3d9" stroke="#4a4448" stroke-width="0.6" stroke-linejoin="round"/>
<path d="M379 366C376.8 371.6 375 374.8 374 380C373 385.2 373.3 385.9 374 392C374.7 398.1 375.9 405.9 377.5 410.5C379.1 415.1 379.6 412.3 382 415C384.4 417.7 381.9 421.4 389.5 424C397.1 426.6 406.5 428.8 420 428C433.5 427.2 448.6 422.7 457 420C465.4 417.3 461.6 417.7 462 414.5C462.4 411.3 457 410.9 459 404C461 397.1 467.8 388.8 472 380C476.2 371.2 480.4 369 480 360C479.6 351 475 342 470 335C465 328 464 323 455 325C446 327 436 341 425 345C414 349 408 343.6 400 345C392 346.4 389.2 347.8 385 352C380.8 356.2 381.2 360.4 379 366Z" fill="#feec93" stroke="#7a6a28" stroke-width="0.6" stroke-linejoin="round"/>
<path d="M463.5 361C463.1 362.7 465.4 368 465.6 372C465.8 376 464.9 381 464.5 385C464.1 389 463.7 392.3 463 396C462.3 399.7 459.9 405.8 460.4 407C460.9 408.2 464.4 405 466 403C467.6 401 469.1 398.2 470 395C470.9 391.8 471.2 387.8 471.4 384C471.6 380.2 471.8 375.7 471.2 372C470.6 368.3 469.3 363.8 468 362C466.7 360.2 463.9 359.3 463.5 361Z" fill="#64e1b1" stroke="#258464" stroke-width="0.7" stroke-linejoin="round"/>
<path d="M466.5 364C466.8 366.7 468.2 374 468 380C467.8 386 465.5 396.7 465 400" fill="none" stroke="#258464" stroke-width="0.7" stroke-linecap="round"/>
<path d="M465 322C470.5 318.8 476.2 325.6 482.5 329C488.8 332.4 492.3 336.1 496.5 339C500.7 341.9 499.6 342.9 503.5 343.5C507.4 344.1 512.5 340.7 516 342C519.5 343.3 518.8 346.4 521 350C523.2 353.6 525.1 356.6 527 360C528.9 363.4 529.6 367 530.5 367C531.4 367 530.2 361 531.5 360C532.8 359 535.3 360.6 537 362C538.7 363.4 540 364.9 540 367C540 369.1 537.3 370.3 537 372.5C536.7 374.7 539.3 376.1 538.5 378C537.7 379.9 535.1 380.6 533 382C530.9 383.4 528.5 383 528 385C527.5 387 530.7 389.6 530.5 392C530.3 394.4 528.9 396.2 527 397C525.1 397.8 522.9 397 521 396C519.1 395 518.5 391.4 517.5 392C516.5 392.6 516 396.6 516 399C516 401.4 518.3 402.5 517.5 404C516.7 405.5 514.1 406.5 512 406.5C509.9 406.5 508.5 405.9 507 404C505.5 402.1 504.5 399.1 504.5 397C504.5 394.9 507.5 394.4 507 393.5C506.5 392.6 505.2 393.2 502 392.5C498.8 391.8 494.6 391.4 491 390C487.4 388.6 486.8 388.3 484 385.5C481.2 382.7 479.4 379.7 477 376C474.6 372.3 473.9 369.8 472 367C470.1 364.2 470.9 366.4 467.5 362C464.1 357.6 455.5 353 455 345C454.5 337 459.5 325.2 465 322Z" fill="#feec93" stroke="#7a6a28" stroke-width="0.6" stroke-linejoin="round"/>
<path d="M366 354C361 356 361.8 360.5 359 364C356.2 367.5 355.2 368.2 352 371.5C348.8 374.8 346.6 377.2 343 380.5C339.4 383.8 336.6 385.3 334 388C331.4 390.7 330.4 391.3 330 394C329.6 396.7 331.2 399.1 332 401.5C332.8 403.9 334.6 404.9 334 406C333.4 407.1 330.2 406.1 329 407C327.8 407.9 328.6 409.2 328 410.5C327.4 411.8 325.8 412.3 326 413.5C326.2 414.7 328.6 415.2 329 416.5C329.4 417.8 327.3 419.1 328 420C328.7 420.9 331 421 332.5 421C334 421 334.3 419.4 335.5 420C336.7 420.6 337.3 422.4 338.5 424C339.7 425.6 340 426.8 341.5 428C343 429.2 344.3 429.8 346 430C347.7 430.2 348.6 429.6 350 429C351.4 428.4 352 426.6 353 427C354 427.4 353.4 430.1 355 431C356.6 431.9 358.9 431.7 361 431.5C363.1 431.3 364.1 430.9 365.5 430C366.9 429.1 366.9 427.3 368 427C369.1 426.7 369.7 428.2 371 428.5C372.3 428.8 373.5 429.4 374.5 428.5C375.5 427.6 375.9 425.8 376 424C376.1 422.2 375 420.9 375 419.5C375 418.1 376.7 417.1 376 417C375.3 416.9 371.2 420.3 371.5 419C371.8 417.7 376.9 414.3 377.5 410.5C378.1 406.7 375.2 404.2 374.5 400C373.8 395.8 373.7 393.7 374 389.5C374.3 385.3 374.4 383.7 376 379C377.6 374.3 380.4 371 382 366C383.6 361 387.2 356.4 384 354C380.8 351.6 371 352 366 354Z" fill="#feec93" stroke="#7a6a28" stroke-width="0.6" stroke-linejoin="round"/>
<path d="M404 352C404.2 356.7 404.5 371.2 405 380C405.5 388.8 406.5 397.7 407 405C407.5 412.3 407.8 420.8 408 424M415 350C415.2 355 415.5 370.8 416 380C416.5 389.2 417.5 397.7 418 405C418.5 412.3 418.8 420.8 419 424M503 346C504.5 348.3 509.8 355.7 512 360C514.2 364.3 515.3 370 516 372M497 352C498.5 354.7 504.2 363.3 506 368C507.8 372.7 507.7 378 508 380M338 398C339.7 399 345.7 401 348 404C350.3 407 351.3 414 352 416M350 392C351.3 393.7 356.3 397.7 358 402C359.7 406.3 359.7 415.3 360 418M430 360C431.7 365 438.7 380.8 440 390C441.3 399.2 438.3 410.8 438 415M386 376C385.3 379.2 382 389 382 395C382 401 385.3 409.2 386 412" fill="none" stroke="#7a6a28" stroke-width="0.6" stroke-linecap="round"/>
<ellipse cx="408.5" cy="360" rx="1.700" ry="2.500" fill="#feec93" stroke="#7a6a28" stroke-width="0.600"/>
<ellipse cx="410" cy="374" rx="1.700" ry="2.500" fill="#feec93" stroke="#7a6a28" stroke-width="0.600"/>
<ellipse cx="411.5" cy="388" rx="1.700" ry="2.500" fill="#feec93" stroke="#7a6a28" stroke-width="0.600"/>
<ellipse cx="412" cy="402" rx="1.700" ry="2.500" fill="#feec93" stroke="#7a6a28" stroke-width="0.600"/>
<ellipse cx="412.5" cy="414" rx="1.700" ry="2.500" fill="#feec93" stroke="#7a6a28" stroke-width="0.600"/>
<path d="M389.5 422C390.3 421.6 392.8 423.8 395 424.5C397.2 425.2 400.3 425.9 403 426C405.7 426.1 408.5 425.6 411 425C413.5 424.4 414.8 423 418 422.5C421.2 422 426.2 422.2 430 422C433.8 421.8 437.7 421.8 441 421.5C444.3 421.2 447.4 421 450 420.5C452.6 420 455.3 417.8 456.5 418.5C457.7 419.2 456.7 422.6 457 425C457.3 427.4 458.2 430.8 458.5 433C458.8 435.2 459.6 437.3 459 438.5C458.4 439.7 456.7 439.6 455 440C453.3 440.4 450.8 440.4 449 441C447.2 441.6 445.7 443.2 444 443.5C442.3 443.8 440.5 443 439 442.5C437.5 442 436.7 440.8 435 440.5C433.3 440.2 430.7 440.7 429 441C427.3 441.3 426.7 442.2 425 442.5C423.3 442.8 420.8 442.7 419 443C417.2 443.3 415.7 444.6 414 444.5C412.3 444.4 410.8 442.6 409 442.5C407.2 442.4 404.8 443.8 403 444C401.2 444.2 399.5 444.1 398 443.5C396.5 442.9 395.1 441.2 394 440.5C392.9 439.8 392 440.2 391.5 439C391 437.8 391.2 435 391 433C390.8 431 390.2 428.8 390 427C389.8 425.2 388.7 422.4 389.5 422Z" fill="#8e0a16" stroke="#5a0a14" stroke-width="0.6" stroke-linejoin="round"/>
<path d="M393 430C395.8 430.5 403.8 432.8 410 433C416.2 433.2 422.3 431.8 430 431C437.7 430.2 451.7 428.5 456 428M393 436C396.7 436.3 407.2 438 415 438C422.8 438 433 436.7 440 436C447 435.3 454.2 434.3 457 434" fill="none" stroke="#6e0810" stroke-width="0.8" stroke-linecap="round"/>
<path d="M397 326C393.8 328.3 398.2 334.7 399 338C399.8 341.3 400.2 343.5 402 346C403.8 348.5 407.7 352.3 410 353C412.3 353.7 414.5 351.5 416 350C417.5 348.5 417.8 346.3 419 344C420.2 341.7 423.2 339.3 423 336C422.8 332.7 422.3 325.7 418 324C413.7 322.3 400.2 323.7 397 326Z" fill="#fff3d9" stroke="#4a4448" stroke-width="0.5" stroke-linejoin="round"/>
<path d="M399 345L394 351L402 357L408 351Z" fill="#feec93" stroke="#7a6a28" stroke-width="0.6" stroke-linejoin="round"/>
<path d="M419 346L426 350L420 357L413 351Z" fill="#feec93" stroke="#7a6a28" stroke-width="0.6" stroke-linejoin="round"/>
<path d="M349 261C347.8 264.3 346.2 267.8 345 272C343.8 276.2 342.8 281.3 342 286C341.2 290.7 340.5 296 340 300C339.5 304 339 306.5 339 310C339 313.5 339.2 317 340 321C340.8 325 341.8 329.9 343.5 334C345.2 338.1 347.4 342.1 350 345.6C352.6 349.1 356.6 352.5 359.4 355C362.2 357.5 365.1 360.6 367 360.6C368.9 360.6 369.2 355.1 371 355C372.8 354.9 374.7 358.2 378 360C381.3 361.8 389.3 364 391 366C392.7 368 388.9 369.2 388 372C387.1 374.8 385.4 383.7 385.6 383C385.8 382.3 387.8 372.2 389 368C390.2 363.8 391.7 360.7 393 358C394.3 355.3 395.7 353.3 397 352C398.3 350.7 399.8 350.8 400.6 350C401.4 349.2 400.4 348.2 402 347C403.6 345.8 408.2 343.2 410 343C411.8 342.8 412 343.2 413 346C414 348.8 414.7 354.2 416 360C417.3 365.8 419.4 379.7 420.7 380.5C422 381.3 422.8 370.4 424 365C425.2 359.6 426.7 352.2 428 348C429.3 343.8 430.2 339.6 432 340C433.8 340.4 435.9 350.1 438.7 350.6C441.5 351.1 446.1 345.8 449 343C451.9 340.2 454.3 336.9 456 334C457.7 331.1 458.7 328.9 459.4 325.8C460.1 322.7 460.4 319.8 460.4 315.5C460.4 311.2 460.1 304.2 459.4 300C458.7 295.8 457.6 293.7 456 290C454.4 286.3 451.8 281.7 450 278C448.2 274.3 446.5 271.3 445 268C443.5 264.7 442.8 262.3 441 258C439.2 253.7 438.2 247.3 434 242C429.8 236.7 422.3 229.5 416 226C409.7 222.5 402.3 221.3 396 221C389.7 220.7 383.7 221.5 378 224C372.3 226.5 366.3 231.3 362 236C357.7 240.7 354.2 247.8 352 252C349.8 256.2 350.2 257.7 349 261Z" fill="#64e1b1" stroke="#258464" stroke-width="0.8" stroke-linejoin="round"/>
<defs><clipPath id="hc"><path d="M349 261C347.8 264.3 346.2 267.8 345 272C343.8 276.2 342.8 281.3 342 286C341.2 290.7 340.5 296 340 300C339.5 304 339 306.5 339 310C339 313.5 339.2 317 340 321C340.8 325 341.8 329.9 343.5 334C345.2 338.1 347.4 342.1 350 345.6C352.6 349.1 356.6 352.5 359.4 355C362.2 357.5 365.1 360.6 367 360.6C368.9 360.6 369.2 355.1 371 355C372.8 354.9 374.7 358.2 378 360C381.3 361.8 389.3 364 391 366C392.7 368 388.9 369.2 388 372C387.1 374.8 385.4 383.7 385.6 383C385.8 382.3 387.8 372.2 389 368C390.2 363.8 391.7 360.7 393 358C394.3 355.3 395.7 353.3 397 352C398.3 350.7 399.8 350.8 400.6 350C401.4 349.2 400.4 348.2 402 347C403.6 345.8 408.2 343.2 410 343C411.8 342.8 412 343.2 413 346C414 348.8 414.7 354.2 416 360C417.3 365.8 419.4 379.7 420.7 380.5C422 381.3 422.8 370.4 424 365C425.2 359.6 426.7 352.2 428 348C429.3 343.8 430.2 339.6 432 340C433.8 340.4 435.9 350.1 438.7 350.6C441.5 351.1 446.1 345.8 449 343C451.9 340.2 454.3 336.9 456 334C457.7 331.1 458.7 328.9 459.4 325.8C460.1 322.7 460.4 319.8 460.4 315.5C460.4 311.2 460.1 304.2 459.4 300C458.7 295.8 457.6 293.7 456 290C454.4 286.3 451.8 281.7 450 278C448.2 274.3 446.5 271.3 445 268C443.5 264.7 442.8 262.3 441 258C439.2 253.7 438.2 247.3 434 242C429.8 236.7 422.3 229.5 416 226C409.7 222.5 402.3 221.3 396 221C389.7 220.7 383.7 221.5 378 224C372.3 226.5 366.3 231.3 362 236C357.7 240.7 354.2 247.8 352 252C349.8 256.2 350.2 257.7 349 261Z"/></clipPath></defs>
<path clip-path="url(#hc)" d="M356 246C349.6 256.8 339 260.4 334.5 282C330 303.6 339.1 307.2 341 318M359.1 242.2C353 254.1 343 258.1 338.6 281.9C334.3 305.8 342.9 309.7 344.7 321.7M362.3 238.5C356.4 251.5 346.9 255.8 342.8 281.9C338.6 307.9 346.7 312.2 348.4 325.3M365.4 235.2C359.9 249.2 350.9 253.9 346.9 282C342.9 310.1 350.6 314.7 352.1 328.8M368.6 232.4C363.3 247.3 354.9 252.3 351.1 282.3C347.3 312.2 354.4 317.2 355.9 332.2M371.7 230.2C366.8 246 358.9 251.2 355.2 282.9C351.6 314.5 358.3 319.7 359.6 335.6M374.9 228.7C370.2 245.2 362.8 250.7 359.4 283.8C355.9 316.8 362.1 322.3 363.3 338.8M378 228C373.6 245.1 366.8 250.8 363.5 285C360.2 319.2 365.9 324.9 367 342M381.1 228.1C377.1 245.7 370.8 251.5 367.6 286.6C364.5 321.7 369.8 327.6 370.7 345.1M384.3 229C380.5 246.9 374.7 252.8 371.8 288.6C368.8 324.3 373.6 330.3 374.4 348.1M387.4 230.6C384 248.7 378.7 254.7 375.9 290.8C373.1 327 377.5 333 378.1 351.1M390.6 232.9C387.4 251 382.7 257.1 380.1 293.4C377.5 329.7 381.3 335.8 381.9 353.9M393.7 235.6C390.9 253.8 386.7 259.8 384.2 296.2C381.8 332.5 385.2 338.5 385.6 356.7M396.9 238.7C394.3 256.8 390.6 262.8 388.4 299C386.1 335.3 389 341.3 389.3 359.4M400 242C397.8 260 394.6 266 392.5 302C390.4 338 392.9 344 393 362M404 229C409.1 248.7 415.6 251.6 421 294.5C426.4 337.4 421.7 348.8 422 372M406.8 231C412.2 250.2 419.1 253 424.8 295.1C430.5 337.2 425.5 348.4 425.8 371.2M409.7 233C415.4 251.9 422.7 254.6 428.7 295.9C434.7 337.3 429.4 348.4 429.7 370.8M412.5 235C418.5 253.6 426.2 256.2 432.5 296.9C438.8 337.7 433.2 348.7 433.5 370.9M415.3 237C421.6 255.3 429.7 257.9 436.3 298.2C442.9 338.5 437 349.4 437.3 371.3M418.2 239C424.8 257.2 433.3 259.6 440.2 299.6C447.1 339.6 440.9 350.4 441.2 372.2M421 241C427.9 259.1 436.8 261.5 444 301.2C451.2 341 444.7 351.8 445 373.5M423.8 243C431 261 440.3 263.4 447.8 303.1C455.3 342.8 448.5 353.6 448.8 375.2M426.7 245C434.2 263.1 443.9 265.5 451.7 305.2C459.5 344.9 452.4 355.7 452.7 377.3M429.5 247C437.3 265.1 447.4 267.6 455.5 307.4C463.6 347.3 456.2 358.1 456.5 379.9M432.3 249C440.4 267.3 450.9 269.8 459.3 309.9C467.7 350.1 460 361 460.3 382.8M435.2 251C443.6 269.5 454.5 272 463.2 312.6C471.9 353.2 463.9 364.1 464.2 386.2M438 253C446.7 271.8 458 274.4 467 315.5C476 356.6 467.7 367.6 468 390" fill="none" stroke="#3fb990" stroke-width="0.700" stroke-linecap="round"/>
<path d="M399 329C401.3 326.7 413.5 329.5 416 331C418.5 332.5 415.2 335.7 414 338C412.8 340.3 410.6 342.8 409 345C407.4 347.2 405.7 351 404.5 351C403.3 351 402.9 348.7 402 345C401.1 341.3 396.7 331.3 399 329Z" fill="#fff3d9"/>
<path d="M401.5 336C401.7 337.5 402 342.5 402.5 345C403 347.5 404.2 350 404.5 351M414.5 334L409 345" fill="none" stroke="#4a4448" stroke-width="0.5" stroke-linecap="round"/>
<path d="M371 296C370.7 292.7 371.8 286.8 373 284C374.2 281.2 376.2 278.3 378 279C379.8 279.7 382.3 284.8 384 288C385.7 291.2 386.7 298.7 388 298C389.3 297.3 390.7 289 392 284C393.3 279 394.5 272 396 268C397.5 264 398.7 259.7 401 260C403.3 260.3 407.5 267 410 270C412.5 273 414 276.5 416 278C418 279.5 420 279.7 422 279C424 278.3 426 273.8 428 274C430 274.2 433.2 277.3 434 280C434.8 282.7 433.7 286.3 433 290C432.3 293.7 431.5 298 430 302C428.5 306 426.7 310.2 424 314C421.3 317.8 417.3 322.2 414 325C410.7 327.8 407 330.2 404 331C401 331.8 398.7 331.2 396 330C393.3 328.8 390.7 326.7 388 324C385.3 321.3 382.2 317.3 380 314C377.8 310.7 376.5 307 375 304C373.5 301 371.3 299.3 371 296Z" fill="#fff3d9" stroke="#4a4448" stroke-width="0.5" stroke-linejoin="round"/>
<path d="M373 295C373.2 294 375.3 292.8 377 292C378.7 291.2 381.3 290 383 290C384.7 290 386.5 290.8 387 292C387.5 293.2 387 295.8 386 297C385 298.2 382.7 298.8 381 299C379.3 299.2 377.3 298.7 376 298C374.7 297.3 372.8 296 373 295Z" fill="#fff" stroke="#444" stroke-width="0.6" stroke-linejoin="round"/>
<ellipse cx="382.2" cy="294.3" rx="3.700" ry="3.900" fill="#3be050" stroke="#1a7a2a" stroke-width="0.600"/>
<path d="M405 286C405.2 284.8 407.3 282.4 409 281.5C410.7 280.6 413.2 280.4 415 280.5C416.8 280.6 419.3 280.9 420 282C420.7 283.1 420 285.8 419 287C418 288.2 415.8 289.2 414 289.5C412.2 289.8 409.5 289.6 408 289C406.5 288.4 404.8 287.2 405 286Z" fill="#fff" stroke="#444" stroke-width="0.6" stroke-linejoin="round"/>
<ellipse cx="413.6" cy="285" rx="4.500" ry="4.200" fill="#3be050" stroke="#1a7a2a" stroke-width="0.600"/>
<path d="M372 293.5C372.8 293 375 291.2 377 290.5C379 289.8 382.2 288.9 384 289C385.8 289.1 387.3 290.7 388 291M404 284.5C404.8 283.8 407 281.4 409 280.5C411 279.6 413.9 279.2 416 279.3C418.1 279.4 420.6 280.7 421.5 281" fill="none" stroke="#2a2a2a" stroke-width="1.1" stroke-linecap="round"/>
<path d="M397 317C398.2 315.3 402.8 312.5 406 311C409.2 309.5 413.7 308.3 416 308C418.3 307.7 419.7 307.7 420 309C420.3 310.3 419.3 313.8 418 316C416.7 318.2 414.3 320.7 412 322C409.7 323.3 406.2 324.2 404 324C401.8 323.8 400.2 322.2 399 321C397.8 319.8 395.8 318.7 397 317Z" fill="#c8425a" stroke="#3a1a20" stroke-width="0.7" stroke-linejoin="round"/>
<path d="M399 316.2C400 315.1 404.2 312.7 407 311.4C409.8 310.1 413.9 308.9 416 308.6C418.1 308.3 419 308.9 419.4 309.4C419.8 309.9 420.2 310.7 418.5 311.5C416.8 312.3 411.9 312.9 409 314C406.1 315.1 402.7 317.4 401 317.8C399.3 318.2 398 317.3 399 316.2Z" fill="#fff"/>
<path d="M397 303C397.3 303.3 398.3 304.8 399 305C399.7 305.2 400.7 304.2 401 304" fill="none" stroke="#555" stroke-width="0.5" stroke-linecap="round"/>
<path d="M376 301L378 304M379 301.5L381 304.5M382 301.5L384 304.5M413 291.5L415 294.5M416 291L418 294M419 290.5L421 293.5" fill="none" stroke="#9a8a7a" stroke-width="0.6" stroke-linecap="round"/>
<path d="M396 262C397.5 265.7 393.3 277.8 392 284C390.7 290.2 389.3 298.3 388 299C386.7 299.7 385.5 291.5 384 288C382.5 284.5 379.2 282.3 379 278C378.8 273.7 380.2 264.7 383 262C385.8 259.3 394.5 258.3 396 262Z" fill="#64e1b1" stroke="#258464" stroke-width="0.5" stroke-linejoin="round"/>
<path d="M426 240C427.2 242 431.2 247.7 433 252C434.8 256.3 436.2 261 437 266C437.8 271 438 276.3 438 282C438 287.7 437.8 294.5 437 300C436.2 305.5 433.7 312.5 433 315M431 238C432.2 240 436.2 245.3 438 250C439.8 254.7 441.2 260.7 442 266C442.8 271.3 443.2 276.3 443 282C442.8 287.7 442 294.3 441 300C440 305.7 437.7 313.3 437 316M380 236C377.7 240.3 369.7 251.3 366 262C362.3 272.7 359.3 288.7 358 300C356.7 311.3 358 325 358 330M392 232C390.7 237 387.3 253.7 384 262C380.7 270.3 374 278.7 372 282M404 232C403.7 235 403.3 244 402 250C400.7 256 397 265 396 268M446 272C447.5 277.5 453.3 295.7 455 305C456.7 314.3 455.8 324.2 456 328M352 300C352.7 305 353.7 321.3 356 330C358.3 338.7 364.3 348.3 366 352M440 320C438.7 324.2 434.7 337 432 345C429.3 353 425.3 364.2 424 368M370 240C367.7 245 359.3 260 356 270C352.7 280 350.7 290.8 350 300C349.3 309.2 351.7 320.8 352 325M412 234C413.3 236.7 418 244.7 420 250C422 255.3 423.3 263.3 424 266M450 300C450.3 303.7 452.3 315.7 452 322C451.7 328.3 448.7 335.3 448 338M345 290C345.2 295 344.2 310.7 346 320C347.8 329.3 354.3 341.7 356 346M362 300C362.3 305 362 321.3 364 330C366 338.7 372.3 348.3 374 352M372 306C372.7 311 373.3 327 376 336C378.7 345 386 356 388 360M444 290C444.3 295 446.7 310.7 446 320C445.3 329.3 441 341.7 440 346M386 232C384.3 236 378 248.7 376 256C374 263.3 374.3 272.7 374 276M398 230C397.3 233.3 395.3 243 394 250C392.7 257 390.7 268.3 390 272M436 300C435 305 432.3 321.3 430 330C427.7 338.7 423.3 348.3 422 352" fill="none" stroke="#258464" stroke-width="0.8" stroke-linecap="round"/>
<path d="M427.5 243C428 243.5 429.5 246.2 430.5 246.2C431.5 246.2 433 243.5 433.5 243M428.5 248.6C429 249.1 430.5 251.8 431.5 251.8C432.5 251.8 434 249.1 434.5 248.6M429.5 254.2C430 254.7 431.5 257.4 432.5 257.4C433.5 257.4 435 254.7 435.5 254.2M430.5 259.8C431 260.3 432.5 263 433.5 263C434.5 263 436 260.3 436.5 259.8M431.5 265.4C432 265.9 433.5 268.6 434.5 268.6C435.5 268.6 437 265.9 437.5 265.4M432.5 271C433 271.5 434.5 274.2 435.5 274.2C436.5 274.2 438 271.5 438.5 271M433.5 276.6C434 277.1 435.5 279.8 436.5 279.8C437.5 279.8 439 277.1 439.5 276.6M434.5 282.2C435 282.7 436.5 285.4 437.5 285.4C438.5 285.4 440 282.7 440.5 282.2M433.9 287.8C434.4 288.3 435.9 291 436.9 291C437.9 291 439.4 288.3 439.9 287.8M433.3 293.4C433.8 293.9 435.3 296.6 436.3 296.6C437.3 296.6 438.8 293.9 439.3 293.4M432.7 299C433.2 299.5 434.7 302.2 435.7 302.2C436.7 302.2 438.2 299.5 438.7 299M432.1 304.6C432.6 305.1 434.1 307.8 435.1 307.8C436.1 307.8 437.6 305.1 438.1 304.6M431.5 310.2C432 310.7 433.5 313.4 434.5 313.4C435.5 313.4 437 310.7 437.5 310.2M347.4 304C347.8 304.5 349.1 307 350 307C350.9 307 352.2 304.5 352.6 304M349.3 309.5C349.7 310 351 312.5 351.9 312.5C352.8 312.5 354.1 310 354.5 309.5M351.2 315C351.6 315.5 352.9 318 353.8 318C354.7 318 356 315.5 356.4 315M353.1 320.5C353.5 321 354.8 323.5 355.7 323.5C356.6 323.5 357.9 321 358.3 320.5M355 326C355.4 326.5 356.7 329 357.6 329C358.5 329 359.8 326.5 360.2 326M356.9 331.5C357.3 332 358.6 334.5 359.5 334.5C360.4 334.5 361.7 332 362.1 331.5M358.8 337C359.2 337.5 360.5 340 361.4 340C362.3 340 363.6 337.5 364 337M360.7 342.5C361.1 343 362.4 345.5 363.3 345.5C364.2 345.5 365.5 343 365.9 342.5M362.6 348C363 348.5 364.3 351 365.2 351C366.1 351 367.4 348.5 367.8 348" fill="none" stroke="#258464" stroke-width="0.8" stroke-linecap="round"/>
<path d="M349 261C347.8 260.4 346.4 256.2 347 252C347.6 247.8 348.8 245.2 352 240C355.2 234.8 358.6 230.6 363 226C367.4 221.4 369 219.6 374 217C379 214.4 382.6 213.6 388 213C393.4 212.4 395.8 212.2 401 214C406.2 215.8 409.2 218.8 414 222C418.8 225.2 420.6 225.6 425 230C429.4 234.4 431.8 239.2 436 244C440.2 248.8 445 250.8 446 254C447 257.2 443.4 260.8 441 260C438.6 259.2 437 254.2 434 250C431 245.8 429.2 242.6 426 239C422.8 235.4 421.2 234.2 418 232C414.8 229.8 414.4 229.4 410 228C405.6 226.6 401.6 225.2 396 225C390.4 224.8 387.2 225.2 382 227C376.8 228.8 374.4 230.6 370 234C365.6 237.4 363.4 239.8 360 244C356.6 248.2 355.2 251.6 353 255C350.8 258.4 350.2 261.6 349 261Z" fill="#878787" stroke="#3c3c3c" stroke-width="0.9" stroke-linejoin="round"/></svg>
</div>

<div id="bottombar">
<svg width="800" height="1066" viewBox="0 0 800 1066">
<!--BOTTOM-->
<g fill="none">
<rect x="635.500" y="992" width="1.200" height="39" fill="#3b3b3b"/>
<rect x="683.400" y="992" width="1.200" height="39" fill="#3b3b3b"/>
<!-- undo -->
<path d="M304.200 1011.600l7.600-6v3.400c6.300.2 10 3.800 10.300 9.900c-2.200-3.300-5.400-4.500-10.300-4.400v3.400z" fill="#e2e2e2"/>
<!-- redo -->
<path d="M363.600 1011.600l-7.600-6v3.400c-6.300.2-10 3.800-10.300 9.900c2.200-3.300 5.400-4.500 10.300-4.400v3.400z" fill="#7e7e7e"/>
<!-- eraser swap -->
<g transform="translate(392 1007.200) rotate(-46)">
<rect x="-6.300" y="-3.900" width="12.600" height="7.800" stroke="#2e8db4" stroke-width="1.300"/>
<rect x="-2.200" y="-4.500" width="9.100" height="9" fill="#2e8db4"/>
</g>
<g stroke="#b9b9b9" stroke-width="1.500">
<path d="M402.500 1007.200c2.600.6 4.600 2.400 5.400 4.800"/>
<path d="M392.300 1018.200c.8 2.500 2.700 4.300 5.300 5"/>
<path d="M408.600 1016.200l-5 6.600" stroke-width="1.800"/>
</g>
<g fill="#b9b9b9"><path d="M409.200 1013.600l-3.600-1l2.800-2.600z"/><path d="M391.400 1016.400l3.400 1.400l-3 2.400z"/><circle cx="402.300" cy="1024.300" r="1.300"/></g>
<!-- eyedropper -->
<g transform="translate(431.600 1020) rotate(-45)" fill="#e6e6e6"><path d="M0 0l3-1.700v3.400z"/><rect x="3" y="-2.100" width="10.800" height="4.200" fill="none" stroke="#e6e6e6" stroke-width="1.300"/><rect x="13.600" y="-4.200" width="2.700" height="8.400" rx="0.800"/><rect x="16" y="-2.300" width="5.200" height="4.600" rx="2"/></g>
<!-- download -->
<g fill="#d8d8d8">
<path d="M479.600 1000.200h4.600v8.600h3.600l-5.900 6.500l-5.900-6.500h3.600z"/>
<rect x="470" y="1017.600" width="23.600" height="5.900"/>
</g>
<rect x="486" y="1019.900" width="5" height="1.500" fill="#252525"/>
<!-- flip -->
<path d="M512.500 1006.800v11.400l8.800-5.700z" fill="#e2e2e2"/>
<path d="M535.800 1007.200v10.600l-8.200-5.300z" stroke="#e2e2e2" stroke-width="1.200"/>
<line x1="524" y1="1003.800" x2="524" y2="1021.500" stroke="#e2e2e2" stroke-width="1.200" stroke-dasharray="2.200 1.300"/>
<!-- rotate off -->
<path d="M565 1003.800a9.500 9.500 0 0 1 6.600 16.300" stroke="#e2e2e2" stroke-width="1.400"/>
<path d="M571 1020.600a9.500 9.500 0 0 1-11.500-14.600" stroke="#e2e2e2" stroke-width="1.400" stroke-dasharray="2.400 1.500"/>
<path d="M561.800 1003.800l4.600-3.200v6.400z" fill="#e2e2e2"/>
<line x1="555.300" y1="1002.800" x2="576.300" y2="1024.200" stroke="#f0f0f0" stroke-width="1.800"/>
<!-- layer erase -->
<path d="M607 1005.600h-10v16.600h18.600v-6.800" stroke="#d8d8d8" stroke-width="1.300"/>
<g transform="translate(613.200 1008.400) rotate(-46)">
<rect x="-6.200" y="-3.600" width="12.400" height="7.200" fill="#252525" stroke="#e6e6e6" stroke-width="1.200"/>
<rect x="-2.200" y="-3.600" width="8.400" height="7.200" fill="#e6e6e6"/>
</g>
<!-- shortcut -->
<rect x="652" y="1004" width="16.200" height="16.300" rx="2.600" fill="#e6e6e6"/>
<path d="M657 1016.800c-1.600-4.400 .6-7.200 4.600-7.400" stroke="#252525" stroke-width="2.200"/>
<path d="M660.600 1006.600h5.200v5.200z" fill="#252525"/>
<!-- dots -->
<g fill="#c4c4c4">
<circle cx="703.200" cy="1005.300" r="1"/><circle cx="707.900" cy="1005.300" r="1"/><circle cx="712.600" cy="1005.300" r="1"/>
<circle cx="703.200" cy="1010" r="1"/><circle cx="707.900" cy="1010" r="1"/><circle cx="712.600" cy="1010" r="1"/>
<circle cx="703.200" cy="1014.700" r="1"/><circle cx="707.900" cy="1014.700" r="1"/><circle cx="712.600" cy="1014.700" r="1"/>
<circle cx="703.200" cy="1019.400" r="1"/><circle cx="707.900" cy="1019.400" r="1"/><circle cx="712.600" cy="1019.400" r="1"/>
</g>
</g>
</svg>
</div>

<div id="status">2429*3000px 350dpi 57% ブラシ: 8.0px 100%</div>
</body>
</html>
